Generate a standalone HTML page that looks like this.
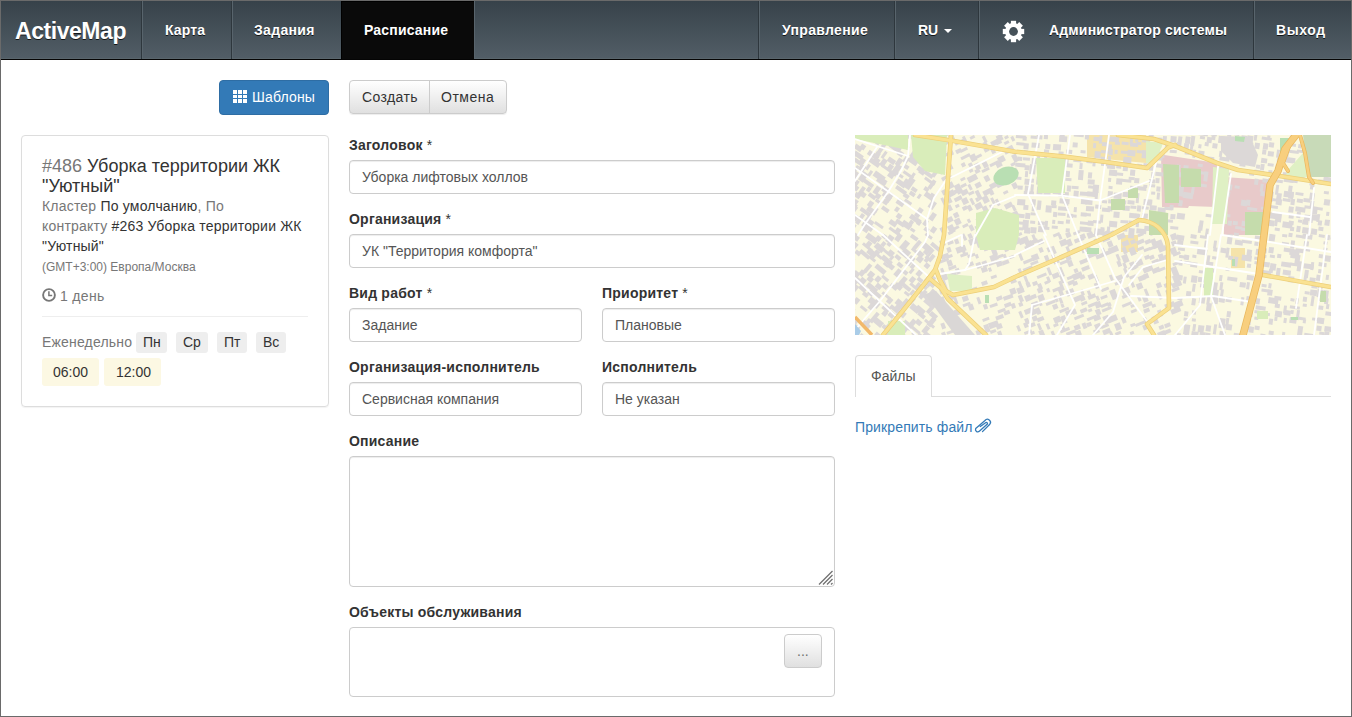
<!DOCTYPE html>
<html><head><meta charset="utf-8">
<style>
*{box-sizing:border-box;margin:0;padding:0}
html,body{width:1352px;height:717px;overflow:hidden;background:#fff}
body{position:relative;font-family:"Liberation Sans",sans-serif;font-size:14px;line-height:20px;color:#333}
.a{position:absolute;white-space:nowrap}
#frame{position:absolute;left:0;top:0;width:1352px;height:717px;border:1px solid #6a6a6a;z-index:50;pointer-events:none}
#nav{position:absolute;left:1px;top:1px;width:1350px;height:58px;background:linear-gradient(to bottom,#37424a 0%,#525e67 100%)}
#navb{position:absolute;left:1px;top:59px;width:1350px;height:1px;background:#050505}
.sd{position:absolute;top:1px;height:58px;width:1px;background:#2e373d}
.sl{position:absolute;top:1px;height:58px;width:1px;background:#58646c}
.nt{position:absolute;top:20px;font-weight:bold;color:#fff;text-shadow:0 1px 0 rgba(0,0,0,.75);white-space:nowrap}
#active{position:absolute;left:341px;top:1px;width:133px;height:58px;background:#0a0a0a;border-left:1px solid #000;border-top:1px solid #000}
.btn{position:absolute;height:34px;border-radius:4px}
.lbl{position:absolute;font-weight:bold;color:#333;white-space:nowrap;letter-spacing:0.22px}
.inp{position:absolute;height:34px;border:1px solid #ccc;border-radius:4px;box-shadow:inset 0 1px 1px rgba(0,0,0,.075);background:#fff}
.itx{position:absolute;color:#555;white-space:nowrap}
.g{color:#777}
.badge{position:absolute;top:332px;height:21px;background:#eee;border-radius:3px}
.tm{position:absolute;top:358px;height:28px;background:#fcf8e3;border-radius:3px}
</style></head><body>
<div id="frame"></div>
<div id="nav"></div>
<div id="navb"></div><div class="a" style="left:1px;top:58px;width:1350px;height:1px;background:#59656c"></div>
<div id="active"></div>
<div class="sd" style="left:141px"></div><div class="sl" style="left:142px"></div>
<div class="sd" style="left:231px"></div><div class="sl" style="left:232px"></div>
<div class="sl" style="left:474px"></div>
<div class="sd" style="left:758px"></div><div class="sl" style="left:759px"></div>
<div class="sd" style="left:894px"></div><div class="sl" style="left:895px"></div>
<div class="sd" style="left:978px"></div><div class="sl" style="left:979px"></div>
<div class="sd" style="left:1253px"></div><div class="sl" style="left:1254px"></div>

<div class="nt" style="left:15px;top:21px;font-size:23px;line-height:20px;letter-spacing:-0.45px">ActiveMap</div>
<div class="nt" style="left:165px;letter-spacing:0.15px">Карта</div>
<div class="nt" style="left:254px;letter-spacing:0.33px">Задания</div>
<div class="nt" style="left:364px;letter-spacing:0.18px">Расписание</div>
<div class="nt" style="left:782px;letter-spacing:0.33px">Управление</div>
<div class="nt" style="left:918px">RU</div>
<div class="a" style="left:944px;top:29px;width:0;height:0;border-left:4px solid transparent;border-right:4px solid transparent;border-top:4px solid #fff"></div>
<svg class="a" style="left:1002px;top:20px" width="23" height="23" viewBox="0 0 23 23">
 <defs><mask id="gm"><g transform="translate(11.5 11.5)" fill="#fff"><circle r="8.4"/><rect x="-2.6" y="-10.7" width="5.2" height="21.4" transform="rotate(0)"/><rect x="-2.6" y="-10.7" width="5.2" height="21.4" transform="rotate(45)"/><rect x="-2.6" y="-10.7" width="5.2" height="21.4" transform="rotate(90)"/><rect x="-2.6" y="-10.7" width="5.2" height="21.4" transform="rotate(135)"/><circle r="4.4" fill="#000"/></g></mask></defs>
 <rect width="23" height="23" fill="#fff" mask="url(#gm)"/>
</svg>
<div class="nt" style="left:1049px;letter-spacing:0.17px">Администратор системы</div>
<div class="nt" style="left:1276px;letter-spacing:0.6px">Выход</div>

<!-- buttons -->
<div class="btn" style="left:219px;top:80px;width:110px;height:35px;background:#337ab7;border:1px solid #2e6da4"></div>
<svg class="a" style="left:233px;top:90px" width="14" height="13" viewBox="0 0 14 13" fill="#fff" shape-rendering="crispEdges"><rect x="0" y="0" width="4" height="4"/><rect x="5" y="0" width="4" height="4"/><rect x="10" y="0" width="4" height="4"/><rect x="0" y="5" width="4" height="3"/><rect x="5" y="5" width="4" height="3"/><rect x="10" y="5" width="4" height="3"/><rect x="0" y="9" width="4" height="4"/><rect x="5" y="9" width="4" height="4"/><rect x="10" y="9" width="4" height="4"/></svg>
<div class="a" style="left:252px;top:87px;color:#fff;letter-spacing:0.17px">Шаблоны</div>

<div class="btn" style="left:349px;top:80px;width:158px;background:linear-gradient(to bottom,#fff 0%,#e0e0e0 100%);border:1px solid #ccc;box-shadow:inset 0 1px 0 rgba(255,255,255,.15),0 1px 1px rgba(0,0,0,.075)"></div>
<div class="a" style="left:429px;top:80px;width:1px;height:34px;background:#ccc"></div>
<div class="a" style="left:362px;top:87px;color:#333;letter-spacing:0.38px">Создать</div>
<div class="a" style="left:441px;top:87px;color:#333;letter-spacing:0.5px">Отмена</div>

<!-- card -->
<div class="a" style="left:21px;top:135px;width:308px;height:272px;border:1px solid #ddd;border-radius:4px;box-shadow:0 1px 1px rgba(0,0,0,.05)"></div>
<div class="a" style="left:42px;top:156px;font-size:18px;line-height:20px;color:#333"><span class="g">#486</span> Уборка территории ЖК<br>"Уютный"</div>
<div class="a" style="left:42px;top:196px;line-height:20px;letter-spacing:0.2px"><span class="g">Кластер</span> По умолчанию<span class="g">, По</span><br><span class="g">контракту</span> #263 Уборка территории ЖК<br>"Уютный"</div>
<div class="a g" style="left:42px;top:257px;font-size:12px">(GMT+3:00) Европа/Москва</div>
<svg class="a" style="left:42px;top:288px" width="14" height="14" viewBox="0 0 14 14">
 <circle cx="7" cy="7" r="5.9" fill="none" stroke="#777" stroke-width="1.9"/>
 <path d="M6.9 3.3 V7.6 H10.2" fill="none" stroke="#777" stroke-width="1.5"/>
</svg>
<div class="a g" style="left:60px;top:286px;letter-spacing:0.33px">1 день</div>
<div class="a" style="left:42px;top:316px;width:266px;height:1px;background:#eee"></div>
<div class="a g" style="left:42px;top:332px;letter-spacing:0.18px">Еженедельно</div>
<div class="badge" style="left:136px;width:31px"></div><div class="a" style="left:143px;top:332px">Пн</div>
<div class="badge" style="left:176px;width:32px"></div><div class="a" style="left:183px;top:332px">Ср</div>
<div class="badge" style="left:217px;width:30px"></div><div class="a" style="left:224px;top:332px">Пт</div>
<div class="badge" style="left:256px;width:30px"></div><div class="a" style="left:263px;top:332px">Вс</div>
<div class="tm" style="left:42px;width:57px"></div><div class="a" style="left:53px;top:362px">06:00</div>
<div class="tm" style="left:104px;width:57px"></div><div class="a" style="left:116px;top:362px">12:00</div>

<!-- form -->
<div class="lbl" style="left:349px;top:135px">Заголовок <span style="font-weight:normal">*</span></div>
<div class="inp" style="left:349px;top:160px;width:486px"></div>
<div class="itx" style="left:362px;top:167px">Уборка лифтовых холлов</div>

<div class="lbl" style="left:349px;top:209px">Организация <span style="font-weight:normal">*</span></div>
<div class="inp" style="left:349px;top:234px;width:486px"></div>
<div class="itx" style="left:362px;top:241px">УК "Территория комфорта"</div>

<div class="lbl" style="left:349px;top:283px">Вид работ <span style="font-weight:normal">*</span></div>
<div class="inp" style="left:349px;top:308px;width:233px"></div>
<div class="itx" style="left:362px;top:315px">Задание</div>
<div class="lbl" style="left:602px;top:283px">Приоритет <span style="font-weight:normal">*</span></div>
<div class="inp" style="left:602px;top:308px;width:233px"></div>
<div class="itx" style="left:615px;top:315px">Плановые</div>

<div class="lbl" style="left:349px;top:357px">Организация-исполнитель</div>
<div class="inp" style="left:349px;top:382px;width:233px"></div>
<div class="itx" style="left:362px;top:389px">Сервисная компания</div>
<div class="lbl" style="left:602px;top:357px">Исполнитель</div>
<div class="inp" style="left:602px;top:382px;width:233px"></div>
<div class="itx" style="left:615px;top:389px">Не указан</div>

<div class="lbl" style="left:349px;top:431px">Описание</div>
<div class="inp" style="left:349px;top:456px;width:486px;height:131px"></div>
<svg class="a" style="left:818px;top:570px" width="16" height="16" viewBox="0 0 16 16" stroke="#6f6f6f" stroke-width="1.2">
 <path d="M1 14.5 L14.5 1"/><path d="M5 14.5 L14.5 5"/><path d="M9 14.5 L14.5 9"/><path d="M13 14.5 L14.5 13"/>
</svg>

<div class="lbl" style="left:349px;top:602px">Объекты обслуживания</div>
<div class="a" style="left:349px;top:627px;width:486px;height:70px;border:1px solid #ccc;border-radius:4px"></div>
<div class="btn" style="left:784px;top:634px;width:38px;background:linear-gradient(to bottom,#fff 0%,#e0e0e0 100%);border:1px solid #ccc"></div>
<div class="a" style="left:797px;top:641px;font-size:14px;color:#707070">...</div>

<!-- map -->
<div id="map" class="a" style="left:855px;top:135px;width:476px;height:200px;background:#fbf9e3;overflow:hidden">
<svg width="476" height="200" viewBox="0 0 476 200" style="position:absolute;left:0;top:0;display:block"><rect width="476" height="200" fill="#fbf9e1"/><path d="M306,19.5 L362,28 L361,72 L334,71 L333,73 L307,72 Z" fill="#e8caca"/><path d="M369,42 L412,45 L411,100 L369,100 Z" fill="#e8caca"/><path d="M232,0 L291,0 L291,28 L260,25 L232,22 Z" fill="#f5e3aa"/><path d="M266,100 L283,100 L283,117 L266,117 Z" fill="#f5e3aa"/><path d="M376,113 L390,113 L390,133 L376,133 Z" fill="#f5e3aa"/><g fill="#dcd8d8"><rect x="0.9" y="-6.0" width="6" height="6" transform="rotate(35 0.9 -6.0)"/><rect x="8.9" y="-7.2" width="5" height="3" transform="rotate(35 8.9 -7.2)"/><rect x="36.3" y="-5.2" width="12" height="4" transform="rotate(35 36.3 -5.2)"/><rect x="43.4" y="-6.0" width="10" height="5" transform="rotate(35 43.4 -6.0)"/><rect x="50.2" y="-4.7" width="8" height="5" transform="rotate(35 50.2 -4.7)"/><rect x="57.0" y="-7.4" width="6" height="5" transform="rotate(35 57.0 -7.4)"/><rect x="63.4" y="-7.3" width="4" height="5" transform="rotate(35 63.4 -7.3)"/><rect x="77.7" y="-7.3" width="5" height="8" transform="rotate(35 77.7 -7.3)"/><rect x="90.9" y="-6.8" width="4" height="5" transform="rotate(-27 90.9 -6.8)"/><rect x="98.0" y="-5.8" width="5" height="3" transform="rotate(-27 98.0 -5.8)"/><rect x="120.3" y="-4.5" width="5" height="5" transform="rotate(-27 120.3 -4.5)"/><rect x="127.3" y="-5.8" width="5" height="3" transform="rotate(-27 127.3 -5.8)"/><rect x="140.7" y="-7.3" width="3" height="10" transform="rotate(-27 140.7 -7.3)"/><rect x="147.6" y="-5.6" width="8" height="5" transform="rotate(-27 147.6 -5.6)"/><rect x="153.9" y="-6.3" width="6" height="3" transform="rotate(-27 153.9 -6.3)"/><rect x="177.1" y="-5.7" width="3" height="4" transform="rotate(5 177.1 -5.7)"/><rect x="184.4" y="-6.8" width="6" height="5" transform="rotate(5 184.4 -6.8)"/><rect x="190.3" y="-6.6" width="3" height="10" transform="rotate(5 190.3 -6.6)"/><rect x="196.9" y="-5.5" width="4" height="4" transform="rotate(5 196.9 -5.5)"/><rect x="205.2" y="-5.3" width="5" height="7" transform="rotate(5 205.2 -5.3)"/><rect x="209.6" y="-6.7" width="5" height="3" transform="rotate(5 209.6 -6.7)"/><rect x="219.2" y="-4.6" width="10" height="6" transform="rotate(5 219.2 -4.6)"/><rect x="223.9" y="-7.4" width="6" height="4" transform="rotate(5 223.9 -7.4)"/><rect x="230.6" y="-5.6" width="4" height="10" transform="rotate(5 230.6 -5.6)"/><rect x="240.5" y="-7.3" width="10" height="3" transform="rotate(5 240.5 -7.3)"/><rect x="254.2" y="-6.4" width="4" height="5" transform="rotate(5 254.2 -6.4)"/><rect x="258.6" y="-6.0" width="10" height="5" transform="rotate(5 258.6 -6.0)"/><rect x="265.5" y="-7.3" width="4" height="4" transform="rotate(5 265.5 -7.3)"/><rect x="286.8" y="-5.2" width="8" height="3" transform="rotate(5 286.8 -5.2)"/><rect x="294.2" y="-5.4" width="5" height="8" transform="rotate(5 294.2 -5.4)"/><rect x="300.5" y="-6.6" width="6" height="5" transform="rotate(5 300.5 -6.6)"/><rect x="310.2" y="-5.5" width="5" height="4" transform="rotate(5 310.2 -5.5)"/><rect x="323.8" y="-6.9" width="5" height="6" transform="rotate(8 323.8 -6.9)"/><rect x="329.1" y="-7.1" width="4" height="3" transform="rotate(8 329.1 -7.1)"/><rect x="336.3" y="-7.0" width="6" height="3" transform="rotate(8 336.3 -7.0)"/><rect x="343.6" y="-5.9" width="10" height="6" transform="rotate(8 343.6 -5.9)"/><rect x="356.6" y="-5.4" width="6" height="6" transform="rotate(8 356.6 -5.4)"/><rect x="363.9" y="-6.1" width="6" height="3" transform="rotate(8 363.9 -6.1)"/><rect x="372.9" y="-4.5" width="4" height="6" transform="rotate(8 372.9 -4.5)"/><rect x="379.9" y="-4.6" width="5" height="5" transform="rotate(8 379.9 -4.6)"/><rect x="386.6" y="-5.2" width="3" height="4" transform="rotate(8 386.6 -5.2)"/><rect x="400.0" y="-4.5" width="3" height="10" transform="rotate(8 400.0 -4.5)"/><rect x="408.3" y="-5.3" width="7" height="3" transform="rotate(8 408.3 -5.3)"/><rect x="415.2" y="-6.4" width="8" height="4" transform="rotate(8 415.2 -6.4)"/><rect x="429.0" y="-5.6" width="5" height="3" transform="rotate(8 429.0 -5.6)"/><rect x="436.4" y="-4.6" width="6" height="4" transform="rotate(8 436.4 -4.6)"/><rect x="443.1" y="-6.5" width="7" height="4" transform="rotate(8 443.1 -6.5)"/><rect x="449.8" y="-6.0" width="4" height="5" transform="rotate(8 449.8 -6.0)"/><rect x="461.9" y="-7.1" width="10" height="6" transform="rotate(8 461.9 -7.1)"/><rect x="470.6" y="-4.7" width="10" height="3" transform="rotate(8 470.6 -4.7)"/><rect x="-5.8" y="-0.0" width="5" height="12" transform="rotate(35 -5.8 -0.0)"/><rect x="15.1" y="1.2" width="12" height="3" transform="rotate(35 15.1 1.2)"/><rect x="36.2" y="1.0" width="5" height="6" transform="rotate(35 36.2 1.0)"/><rect x="44.4" y="2.3" width="6" height="10" transform="rotate(35 44.4 2.3)"/><rect x="56.9" y="0.5" width="12" height="3" transform="rotate(35 56.9 0.5)"/><rect x="62.9" y="1.8" width="4" height="6" transform="rotate(35 62.9 1.8)"/><rect x="71.6" y="0.5" width="6" height="12" transform="rotate(35 71.6 0.5)"/><rect x="78.7" y="-0.1" width="8" height="4" transform="rotate(35 78.7 -0.1)"/><rect x="86.1" y="-0.4" width="12" height="4" transform="rotate(-27 86.1 -0.4)"/><rect x="93.1" y="1.1" width="5" height="6" transform="rotate(-27 93.1 1.1)"/><rect x="106.9" y="2.2" width="3" height="6" transform="rotate(-27 106.9 2.2)"/><rect x="114.5" y="2.2" width="5" height="3" transform="rotate(-27 114.5 2.2)"/><rect x="126.8" y="1.9" width="3" height="7" transform="rotate(-27 126.8 1.9)"/><rect x="140.6" y="1.6" width="6" height="6" transform="rotate(-27 140.6 1.6)"/><rect x="149.0" y="1.9" width="4" height="3" transform="rotate(-27 149.0 1.9)"/><rect x="155.3" y="2.2" width="3" height="5" transform="rotate(-27 155.3 2.2)"/><rect x="161.0" y="-0.0" width="10" height="3" transform="rotate(5 161.0 -0.0)"/><rect x="167.9" y="1.5" width="4" height="4" transform="rotate(5 167.9 1.5)"/><rect x="175.8" y="0.6" width="6" height="3" transform="rotate(5 175.8 0.6)"/><rect x="181.6" y="0.1" width="6" height="4" transform="rotate(5 181.6 0.1)"/><rect x="189.1" y="-0.0" width="4" height="4" transform="rotate(5 189.1 -0.0)"/><rect x="204.4" y="0.7" width="8" height="6" transform="rotate(5 204.4 0.7)"/><rect x="238.7" y="1.7" width="6" height="4" transform="rotate(5 238.7 1.7)"/><rect x="244.5" y="0.6" width="3" height="8" transform="rotate(5 244.5 0.6)"/><rect x="254.3" y="1.5" width="10" height="5" transform="rotate(5 254.3 1.5)"/><rect x="275.4" y="-0.4" width="3" height="10" transform="rotate(5 275.4 -0.4)"/><rect x="280.7" y="-0.3" width="3" height="7" transform="rotate(5 280.7 -0.3)"/><rect x="287.3" y="2.2" width="8" height="5" transform="rotate(5 287.3 2.2)"/><rect x="295.2" y="2.5" width="10" height="3" transform="rotate(5 295.2 2.5)"/><rect x="302.5" y="2.4" width="5" height="5" transform="rotate(5 302.5 2.4)"/><rect x="308.0" y="1.0" width="4" height="5" transform="rotate(5 308.0 1.0)"/><rect x="315.8" y="1.1" width="6" height="6" transform="rotate(5 315.8 1.1)"/><rect x="323.5" y="1.2" width="4" height="10" transform="rotate(8 323.5 1.2)"/><rect x="330.8" y="1.3" width="5" height="7" transform="rotate(8 330.8 1.3)"/><rect x="336.4" y="0.7" width="4" height="10" transform="rotate(8 336.4 0.7)"/><rect x="345.2" y="0.8" width="5" height="3" transform="rotate(8 345.2 0.8)"/><rect x="352.3" y="1.7" width="5" height="6" transform="rotate(8 352.3 1.7)"/><rect x="356.7" y="0.8" width="4" height="4" transform="rotate(8 356.7 0.8)"/><rect x="363.9" y="0.8" width="6" height="7" transform="rotate(8 363.9 0.8)"/><rect x="386.7" y="0.2" width="6" height="6" transform="rotate(8 386.7 0.2)"/><rect x="392.6" y="0.3" width="6" height="8" transform="rotate(8 392.6 0.3)"/><rect x="407.0" y="1.5" width="10" height="3" transform="rotate(8 407.0 1.5)"/><rect x="412.5" y="0.3" width="3" height="4" transform="rotate(8 412.5 0.3)"/><rect x="435.0" y="0.6" width="7" height="3" transform="rotate(8 435.0 0.6)"/><rect x="449.4" y="1.8" width="7" height="4" transform="rotate(8 449.4 1.8)"/><rect x="471.0" y="0.1" width="8" height="3" transform="rotate(8 471.0 0.1)"/><rect x="476.5" y="1.1" width="8" height="5" transform="rotate(8 476.5 1.1)"/><rect x="-6.1" y="9.0" width="8" height="4" transform="rotate(35 -6.1 9.0)"/><rect x="1.3" y="8.6" width="8" height="5" transform="rotate(35 1.3 8.6)"/><rect x="7.2" y="8.5" width="5" height="5" transform="rotate(35 7.2 8.5)"/><rect x="28.4" y="7.5" width="4" height="12" transform="rotate(35 28.4 7.5)"/><rect x="37.0" y="6.6" width="12" height="6" transform="rotate(35 37.0 6.6)"/><rect x="43.7" y="7.6" width="4" height="6" transform="rotate(35 43.7 7.6)"/><rect x="50.8" y="9.1" width="5" height="4" transform="rotate(35 50.8 9.1)"/><rect x="64.5" y="8.9" width="12" height="5" transform="rotate(35 64.5 8.9)"/><rect x="79.2" y="6.8" width="6" height="3" transform="rotate(35 79.2 6.8)"/><rect x="85.4" y="7.2" width="12" height="5" transform="rotate(-27 85.4 7.2)"/><rect x="99.5" y="8.0" width="10" height="3" transform="rotate(-27 99.5 8.0)"/><rect x="127.4" y="8.1" width="4" height="5" transform="rotate(-27 127.4 8.1)"/><rect x="135.2" y="7.2" width="10" height="5" transform="rotate(-27 135.2 7.2)"/><rect x="140.5" y="7.7" width="6" height="3" transform="rotate(-27 140.5 7.7)"/><rect x="148.7" y="7.4" width="5" height="3" transform="rotate(-27 148.7 7.4)"/><rect x="161.4" y="7.1" width="8" height="3" transform="rotate(5 161.4 7.1)"/><rect x="168.9" y="8.0" width="5" height="6" transform="rotate(5 168.9 8.0)"/><rect x="176.8" y="7.4" width="8" height="5" transform="rotate(5 176.8 7.4)"/><rect x="190.5" y="8.8" width="5" height="5" transform="rotate(5 190.5 8.8)"/><rect x="198.3" y="8.9" width="8" height="6" transform="rotate(5 198.3 8.9)"/><rect x="217.9" y="7.2" width="5" height="5" transform="rotate(5 217.9 7.2)"/><rect x="238.3" y="8.1" width="3" height="5" transform="rotate(5 238.3 8.1)"/><rect x="247.2" y="6.9" width="6" height="4" transform="rotate(5 247.2 6.9)"/><rect x="253.1" y="9.2" width="4" height="6" transform="rotate(5 253.1 9.2)"/><rect x="260.0" y="6.6" width="5" height="3" transform="rotate(5 260.0 6.6)"/><rect x="266.8" y="6.6" width="7" height="3" transform="rotate(5 266.8 6.6)"/><rect x="275.4" y="7.4" width="8" height="4" transform="rotate(5 275.4 7.4)"/><rect x="281.5" y="6.7" width="5" height="3" transform="rotate(5 281.5 6.7)"/><rect x="302.6" y="7.9" width="4" height="5" transform="rotate(5 302.6 7.9)"/><rect x="310.1" y="9.0" width="3" height="8" transform="rotate(5 310.1 9.0)"/><rect x="315.6" y="8.1" width="6" height="5" transform="rotate(5 315.6 8.1)"/><rect x="321.8" y="7.1" width="4" height="4" transform="rotate(8 321.8 7.1)"/><rect x="329.3" y="7.9" width="5" height="7" transform="rotate(8 329.3 7.9)"/><rect x="335.9" y="6.8" width="3" height="10" transform="rotate(8 335.9 6.8)"/><rect x="343.7" y="9.0" width="3" height="4" transform="rotate(8 343.7 9.0)"/><rect x="350.0" y="6.9" width="4" height="4" transform="rotate(8 350.0 6.9)"/><rect x="357.8" y="8.0" width="5" height="5" transform="rotate(8 357.8 8.0)"/><rect x="378.2" y="9.5" width="4" height="6" transform="rotate(8 378.2 9.5)"/><rect x="385.4" y="7.8" width="6" height="5" transform="rotate(8 385.4 7.8)"/><rect x="392.4" y="6.8" width="6" height="6" transform="rotate(8 392.4 6.8)"/><rect x="400.1" y="7.6" width="5" height="6" transform="rotate(8 400.1 7.6)"/><rect x="408.5" y="8.0" width="5" height="6" transform="rotate(8 408.5 8.0)"/><rect x="414.4" y="7.1" width="5" height="5" transform="rotate(8 414.4 7.1)"/><rect x="427.6" y="7.9" width="3" height="10" transform="rotate(8 427.6 7.9)"/><rect x="435.2" y="8.1" width="6" height="3" transform="rotate(8 435.2 8.1)"/><rect x="443.5" y="9.0" width="3" height="4" transform="rotate(8 443.5 9.0)"/><rect x="450.2" y="7.2" width="5" height="3" transform="rotate(8 450.2 7.2)"/><rect x="456.9" y="7.9" width="3" height="10" transform="rotate(8 456.9 7.9)"/><rect x="463.5" y="8.7" width="3" height="8" transform="rotate(8 463.5 8.7)"/><rect x="469.7" y="6.6" width="4" height="6" transform="rotate(8 469.7 6.6)"/><rect x="476.5" y="6.9" width="6" height="3" transform="rotate(8 476.5 6.9)"/><rect x="-7.4" y="15.5" width="10" height="3" transform="rotate(35 -7.4 15.5)"/><rect x="0.7" y="15.4" width="10" height="5" transform="rotate(35 0.7 15.4)"/><rect x="14.7" y="14.8" width="12" height="5" transform="rotate(35 14.7 14.8)"/><rect x="21.8" y="16.2" width="5" height="5" transform="rotate(35 21.8 16.2)"/><rect x="30.2" y="15.7" width="3" height="8" transform="rotate(35 30.2 15.7)"/><rect x="44.4" y="14.9" width="6" height="5" transform="rotate(35 44.4 14.9)"/><rect x="57.7" y="16.1" width="12" height="6" transform="rotate(35 57.7 16.1)"/><rect x="63.0" y="15.4" width="3" height="5" transform="rotate(35 63.0 15.4)"/><rect x="71.9" y="13.9" width="3" height="10" transform="rotate(35 71.9 13.9)"/><rect x="78.7" y="13.6" width="10" height="6" transform="rotate(35 78.7 13.6)"/><rect x="84.7" y="14.6" width="5" height="5" transform="rotate(-27 84.7 14.6)"/><rect x="93.2" y="14.4" width="3" height="7" transform="rotate(-27 93.2 14.4)"/><rect x="100.1" y="15.6" width="6" height="4" transform="rotate(-27 100.1 15.6)"/><rect x="104.5" y="15.4" width="8" height="3" transform="rotate(-27 104.5 15.4)"/><rect x="128.4" y="14.3" width="5" height="4" transform="rotate(-27 128.4 14.3)"/><rect x="135.3" y="14.8" width="4" height="5" transform="rotate(-27 135.3 14.8)"/><rect x="148.0" y="14.4" width="10" height="6" transform="rotate(-27 148.0 14.4)"/><rect x="155.3" y="14.2" width="3" height="5" transform="rotate(-27 155.3 14.2)"/><rect x="168.8" y="15.1" width="4" height="3" transform="rotate(5 168.8 15.1)"/><rect x="189.2" y="14.3" width="5" height="3" transform="rotate(5 189.2 14.3)"/><rect x="203.7" y="16.3" width="5" height="3" transform="rotate(5 203.7 16.3)"/><rect x="211.4" y="14.6" width="6" height="4" transform="rotate(5 211.4 14.6)"/><rect x="225.7" y="15.1" width="5" height="3" transform="rotate(5 225.7 15.1)"/><rect x="239.9" y="15.9" width="6" height="7" transform="rotate(5 239.9 15.9)"/><rect x="246.2" y="15.0" width="8" height="3" transform="rotate(5 246.2 15.0)"/><rect x="254.1" y="14.0" width="4" height="6" transform="rotate(5 254.1 14.0)"/><rect x="259.8" y="14.8" width="3" height="4" transform="rotate(5 259.8 14.8)"/><rect x="266.0" y="15.4" width="10" height="3" transform="rotate(5 266.0 15.4)"/><rect x="272.7" y="14.8" width="8" height="6" transform="rotate(5 272.7 14.8)"/><rect x="281.8" y="15.0" width="8" height="3" transform="rotate(5 281.8 15.0)"/><rect x="287.2" y="15.0" width="5" height="8" transform="rotate(5 287.2 15.0)"/><rect x="294.7" y="14.6" width="4" height="3" transform="rotate(5 294.7 14.6)"/><rect x="302.8" y="16.5" width="7" height="6" transform="rotate(5 302.8 16.5)"/><rect x="314.9" y="14.7" width="7" height="3" transform="rotate(5 314.9 14.7)"/><rect x="330.3" y="14.4" width="5" height="5" transform="rotate(8 330.3 14.4)"/><rect x="338.3" y="14.6" width="3" height="8" transform="rotate(8 338.3 14.6)"/><rect x="343.7" y="15.4" width="6" height="6" transform="rotate(8 343.7 15.4)"/><rect x="364.6" y="15.8" width="3" height="6" transform="rotate(8 364.6 15.8)"/><rect x="372.1" y="14.0" width="5" height="6" transform="rotate(8 372.1 14.0)"/><rect x="386.5" y="16.1" width="5" height="7" transform="rotate(8 386.5 16.1)"/><rect x="393.6" y="14.6" width="6" height="4" transform="rotate(8 393.6 14.6)"/><rect x="407.6" y="14.3" width="4" height="5" transform="rotate(8 407.6 14.3)"/><rect x="413.2" y="16.0" width="6" height="5" transform="rotate(8 413.2 16.0)"/><rect x="422.1" y="14.6" width="3" height="8" transform="rotate(8 422.1 14.6)"/><rect x="428.3" y="15.0" width="6" height="8" transform="rotate(8 428.3 15.0)"/><rect x="434.1" y="14.7" width="10" height="3" transform="rotate(8 434.1 14.7)"/><rect x="442.1" y="14.4" width="7" height="3" transform="rotate(8 442.1 14.4)"/><rect x="450.0" y="15.1" width="5" height="5" transform="rotate(8 450.0 15.1)"/><rect x="455.6" y="13.8" width="3" height="8" transform="rotate(8 455.6 13.8)"/><rect x="464.0" y="15.7" width="4" height="4" transform="rotate(8 464.0 15.7)"/><rect x="468.7" y="16.1" width="6" height="3" transform="rotate(8 468.7 16.1)"/><rect x="478.1" y="14.2" width="5" height="4" transform="rotate(8 478.1 14.2)"/><rect x="0.4" y="22.6" width="10" height="4" transform="rotate(35 0.4 22.6)"/><rect x="7.0" y="22.5" width="5" height="5" transform="rotate(35 7.0 22.5)"/><rect x="15.9" y="21.9" width="12" height="5" transform="rotate(35 15.9 21.9)"/><rect x="20.6" y="21.7" width="6" height="5" transform="rotate(35 20.6 21.7)"/><rect x="28.6" y="23.0" width="5" height="8" transform="rotate(35 28.6 23.0)"/><rect x="34.6" y="21.5" width="8" height="5" transform="rotate(35 34.6 21.5)"/><rect x="44.2" y="22.4" width="5" height="8" transform="rotate(35 44.2 22.4)"/><rect x="50.6" y="21.1" width="5" height="6" transform="rotate(35 50.6 21.1)"/><rect x="55.7" y="20.7" width="10" height="6" transform="rotate(35 55.7 20.7)"/><rect x="63.7" y="22.9" width="8" height="5" transform="rotate(35 63.7 22.9)"/><rect x="70.9" y="20.6" width="4" height="8" transform="rotate(35 70.9 20.6)"/><rect x="86.4" y="20.5" width="12" height="3" transform="rotate(-27 86.4 20.5)"/><rect x="105.4" y="22.6" width="10" height="3" transform="rotate(-27 105.4 22.6)"/><rect x="114.0" y="21.0" width="6" height="7" transform="rotate(-27 114.0 21.0)"/><rect x="119.7" y="21.6" width="7" height="3" transform="rotate(-27 119.7 21.6)"/><rect x="142.0" y="23.2" width="7" height="6" transform="rotate(-27 142.0 23.2)"/><rect x="156.1" y="20.7" width="5" height="8" transform="rotate(-27 156.1 20.7)"/><rect x="162.4" y="21.6" width="5" height="4" transform="rotate(5 162.4 21.6)"/><rect x="168.1" y="22.2" width="7" height="3" transform="rotate(5 168.1 22.2)"/><rect x="177.0" y="22.9" width="7" height="6" transform="rotate(5 177.0 22.9)"/><rect x="182.2" y="21.1" width="3" height="8" transform="rotate(5 182.2 21.1)"/><rect x="189.3" y="21.3" width="3" height="7" transform="rotate(5 189.3 21.3)"/><rect x="197.6" y="20.9" width="6" height="4" transform="rotate(5 197.6 20.9)"/><rect x="205.5" y="20.9" width="4" height="6" transform="rotate(5 205.5 20.9)"/><rect x="210.0" y="20.7" width="4" height="10" transform="rotate(5 210.0 20.7)"/><rect x="218.7" y="21.7" width="8" height="5" transform="rotate(5 218.7 21.7)"/><rect x="231.8" y="23.0" width="6" height="5" transform="rotate(5 231.8 23.0)"/><rect x="238.0" y="23.2" width="3" height="8" transform="rotate(5 238.0 23.2)"/><rect x="245.7" y="21.5" width="5" height="4" transform="rotate(5 245.7 21.5)"/><rect x="253.2" y="21.0" width="3" height="6" transform="rotate(5 253.2 21.0)"/><rect x="268.5" y="21.7" width="6" height="6" transform="rotate(5 268.5 21.7)"/><rect x="272.7" y="22.2" width="4" height="8" transform="rotate(5 272.7 22.2)"/><rect x="294.0" y="20.6" width="3" height="4" transform="rotate(5 294.0 20.6)"/><rect x="300.6" y="22.2" width="7" height="3" transform="rotate(5 300.6 22.2)"/><rect x="349.5" y="20.9" width="10" height="4" transform="rotate(8 349.5 20.9)"/><rect x="364.8" y="21.4" width="10" height="4" transform="rotate(8 364.8 21.4)"/><rect x="371.3" y="21.1" width="4" height="3" transform="rotate(8 371.3 21.1)"/><rect x="379.5" y="21.0" width="5" height="4" transform="rotate(8 379.5 21.0)"/><rect x="406.5" y="22.8" width="6" height="5" transform="rotate(8 406.5 22.8)"/><rect x="422.2" y="22.9" width="7" height="4" transform="rotate(8 422.2 22.9)"/><rect x="428.8" y="22.1" width="10" height="5" transform="rotate(8 428.8 22.1)"/><rect x="433.7" y="22.3" width="7" height="5" transform="rotate(8 433.7 22.3)"/><rect x="449.6" y="21.9" width="7" height="5" transform="rotate(8 449.6 21.9)"/><rect x="455.6" y="22.1" width="4" height="6" transform="rotate(8 455.6 22.1)"/><rect x="462.8" y="22.3" width="6" height="3" transform="rotate(8 462.8 22.3)"/><rect x="469.5" y="21.3" width="5" height="5" transform="rotate(8 469.5 21.3)"/><rect x="476.7" y="23.1" width="3" height="7" transform="rotate(8 476.7 23.1)"/><rect x="2.0" y="29.9" width="3" height="8" transform="rotate(35 2.0 29.9)"/><rect x="6.6" y="28.5" width="6" height="8" transform="rotate(35 6.6 28.5)"/><rect x="13.5" y="28.8" width="3" height="6" transform="rotate(35 13.5 28.8)"/><rect x="27.7" y="29.0" width="12" height="3" transform="rotate(35 27.7 29.0)"/><rect x="35.0" y="28.6" width="5" height="5" transform="rotate(35 35.0 28.6)"/><rect x="42.2" y="28.4" width="6" height="12" transform="rotate(35 42.2 28.4)"/><rect x="50.5" y="28.9" width="5" height="4" transform="rotate(35 50.5 28.9)"/><rect x="64.2" y="30.5" width="8" height="5" transform="rotate(35 64.2 30.5)"/><rect x="72.3" y="29.5" width="6" height="4" transform="rotate(35 72.3 29.5)"/><rect x="77.0" y="29.2" width="3" height="8" transform="rotate(35 77.0 29.2)"/><rect x="84.5" y="29.4" width="5" height="3" transform="rotate(-27 84.5 29.4)"/><rect x="92.7" y="28.6" width="3" height="7" transform="rotate(-27 92.7 28.6)"/><rect x="105.7" y="28.9" width="4" height="4" transform="rotate(-27 105.7 28.9)"/><rect x="112.8" y="29.0" width="4" height="4" transform="rotate(-27 112.8 29.0)"/><rect x="118.7" y="29.4" width="5" height="7" transform="rotate(-27 118.7 29.4)"/><rect x="126.7" y="28.2" width="5" height="6" transform="rotate(-27 126.7 28.2)"/><rect x="134.3" y="29.5" width="10" height="3" transform="rotate(-27 134.3 29.5)"/><rect x="140.2" y="28.7" width="6" height="5" transform="rotate(-27 140.2 28.7)"/><rect x="155.3" y="29.1" width="5" height="3" transform="rotate(-27 155.3 29.1)"/><rect x="160.5" y="27.6" width="10" height="4" transform="rotate(5 160.5 27.6)"/><rect x="169.9" y="30.1" width="5" height="5" transform="rotate(5 169.9 30.1)"/><rect x="175.0" y="29.0" width="6" height="10" transform="rotate(5 175.0 29.0)"/><rect x="189.8" y="28.2" width="3" height="4" transform="rotate(5 189.8 28.2)"/><rect x="196.9" y="28.7" width="5" height="6" transform="rotate(5 196.9 28.7)"/><rect x="203.1" y="28.6" width="7" height="3" transform="rotate(5 203.1 28.6)"/><rect x="209.8" y="28.0" width="8" height="4" transform="rotate(5 209.8 28.0)"/><rect x="224.8" y="28.0" width="3" height="6" transform="rotate(5 224.8 28.0)"/><rect x="246.2" y="27.7" width="10" height="3" transform="rotate(5 246.2 27.7)"/><rect x="252.4" y="28.6" width="8" height="5" transform="rotate(5 252.4 28.6)"/><rect x="261.5" y="29.3" width="5" height="4" transform="rotate(5 261.5 29.3)"/><rect x="268.2" y="29.9" width="5" height="6" transform="rotate(5 268.2 29.9)"/><rect x="282.4" y="28.7" width="5" height="3" transform="rotate(5 282.4 28.7)"/><rect x="288.6" y="28.0" width="5" height="4" transform="rotate(5 288.6 28.0)"/><rect x="294.4" y="30.4" width="4" height="5" transform="rotate(5 294.4 30.4)"/><rect x="300.7" y="28.3" width="7" height="4" transform="rotate(5 300.7 28.3)"/><rect x="321.8" y="29.4" width="4" height="8" transform="rotate(8 321.8 29.4)"/><rect x="328.8" y="29.9" width="5" height="10" transform="rotate(8 328.8 29.9)"/><rect x="343.0" y="28.6" width="5" height="3" transform="rotate(8 343.0 28.6)"/><rect x="364.6" y="29.3" width="10" height="6" transform="rotate(8 364.6 29.3)"/><rect x="384.7" y="28.1" width="6" height="3" transform="rotate(8 384.7 28.1)"/><rect x="401.3" y="29.4" width="4" height="4" transform="rotate(8 401.3 29.4)"/><rect x="405.8" y="28.7" width="4" height="6" transform="rotate(8 405.8 28.7)"/><rect x="412.9" y="28.0" width="6" height="3" transform="rotate(8 412.9 28.0)"/><rect x="421.0" y="28.7" width="5" height="4" transform="rotate(8 421.0 28.7)"/><rect x="455.8" y="29.8" width="7" height="5" transform="rotate(8 455.8 29.8)"/><rect x="471.0" y="30.4" width="8" height="3" transform="rotate(8 471.0 30.4)"/><rect x="476.7" y="29.6" width="3" height="4" transform="rotate(8 476.7 29.6)"/><rect x="-0.0" y="35.3" width="6" height="10" transform="rotate(35 -0.0 35.3)"/><rect x="8.6" y="36.0" width="6" height="10" transform="rotate(35 8.6 36.0)"/><rect x="15.7" y="35.0" width="3" height="6" transform="rotate(35 15.7 35.0)"/><rect x="21.0" y="35.5" width="12" height="6" transform="rotate(35 21.0 35.5)"/><rect x="34.9" y="36.6" width="6" height="5" transform="rotate(35 34.9 36.6)"/><rect x="42.3" y="36.7" width="8" height="3" transform="rotate(35 42.3 36.7)"/><rect x="49.3" y="35.2" width="12" height="3" transform="rotate(35 49.3 35.2)"/><rect x="58.4" y="37.2" width="3" height="10" transform="rotate(35 58.4 37.2)"/><rect x="64.8" y="34.8" width="6" height="3" transform="rotate(35 64.8 34.8)"/><rect x="70.6" y="35.0" width="10" height="4" transform="rotate(35 70.6 35.0)"/><rect x="79.4" y="35.6" width="4" height="6" transform="rotate(35 79.4 35.6)"/><rect x="84.1" y="36.1" width="5" height="4" transform="rotate(-27 84.1 36.1)"/><rect x="113.7" y="35.3" width="4" height="3" transform="rotate(-27 113.7 35.3)"/><rect x="119.3" y="35.4" width="5" height="4" transform="rotate(-27 119.3 35.4)"/><rect x="126.3" y="35.4" width="8" height="3" transform="rotate(-27 126.3 35.4)"/><rect x="155.8" y="35.3" width="6" height="6" transform="rotate(-27 155.8 35.3)"/><rect x="170.3" y="36.0" width="3" height="6" transform="rotate(5 170.3 36.0)"/><rect x="183.7" y="35.4" width="3" height="8" transform="rotate(5 183.7 35.4)"/><rect x="189.6" y="35.6" width="3" height="10" transform="rotate(5 189.6 35.6)"/><rect x="211.1" y="35.8" width="4" height="6" transform="rotate(5 211.1 35.8)"/><rect x="223.8" y="34.9" width="5" height="10" transform="rotate(5 223.8 34.9)"/><rect x="233.3" y="37.2" width="4" height="6" transform="rotate(5 233.3 37.2)"/><rect x="254.3" y="34.6" width="8" height="6" transform="rotate(5 254.3 34.6)"/><rect x="260.3" y="37.3" width="8" height="3" transform="rotate(5 260.3 37.3)"/><rect x="275.4" y="34.6" width="5" height="6" transform="rotate(5 275.4 34.6)"/><rect x="296.4" y="37.0" width="3" height="6" transform="rotate(5 296.4 37.0)"/><rect x="300.5" y="36.8" width="8" height="4" transform="rotate(5 300.5 36.8)"/><rect x="315.2" y="37.1" width="3" height="5" transform="rotate(5 315.2 37.1)"/><rect x="322.9" y="36.9" width="6" height="5" transform="rotate(8 322.9 36.9)"/><rect x="336.1" y="35.2" width="6" height="3" transform="rotate(8 336.1 35.2)"/><rect x="344.9" y="36.1" width="8" height="3" transform="rotate(8 344.9 36.1)"/><rect x="349.6" y="36.2" width="4" height="10" transform="rotate(8 349.6 36.2)"/><rect x="364.8" y="36.5" width="5" height="5" transform="rotate(8 364.8 36.5)"/><rect x="372.2" y="37.3" width="4" height="3" transform="rotate(8 372.2 37.3)"/><rect x="394.4" y="37.3" width="5" height="3" transform="rotate(8 394.4 37.3)"/><rect x="399.5" y="34.6" width="10" height="3" transform="rotate(8 399.5 34.6)"/><rect x="413.6" y="34.9" width="4" height="3" transform="rotate(8 413.6 34.9)"/><rect x="421.5" y="34.9" width="3" height="8" transform="rotate(8 421.5 34.9)"/><rect x="428.1" y="36.9" width="8" height="4" transform="rotate(8 428.1 36.9)"/><rect x="433.7" y="35.2" width="6" height="6" transform="rotate(8 433.7 35.2)"/><rect x="443.4" y="36.4" width="7" height="6" transform="rotate(8 443.4 36.4)"/><rect x="449.3" y="37.0" width="5" height="3" transform="rotate(8 449.3 37.0)"/><rect x="462.7" y="34.7" width="5" height="5" transform="rotate(8 462.7 34.7)"/><rect x="469.1" y="34.6" width="7" height="6" transform="rotate(8 469.1 34.6)"/><rect x="476.9" y="35.0" width="3" height="6" transform="rotate(8 476.9 35.0)"/><rect x="-5.0" y="43.2" width="5" height="8" transform="rotate(35 -5.0 43.2)"/><rect x="-0.1" y="43.2" width="6" height="10" transform="rotate(35 -0.1 43.2)"/><rect x="9.3" y="43.0" width="12" height="4" transform="rotate(35 9.3 43.0)"/><rect x="23.3" y="42.4" width="10" height="4" transform="rotate(35 23.3 42.4)"/><rect x="28.5" y="43.4" width="5" height="5" transform="rotate(35 28.5 43.4)"/><rect x="43.5" y="43.6" width="10" height="5" transform="rotate(35 43.5 43.6)"/><rect x="51.0" y="43.2" width="8" height="6" transform="rotate(35 51.0 43.2)"/><rect x="55.7" y="41.9" width="6" height="12" transform="rotate(35 55.7 41.9)"/><rect x="70.7" y="41.6" width="12" height="3" transform="rotate(35 70.7 41.6)"/><rect x="78.2" y="44.3" width="4" height="10" transform="rotate(35 78.2 44.3)"/><rect x="86.0" y="43.0" width="6" height="4" transform="rotate(-27 86.0 43.0)"/><rect x="91.8" y="42.4" width="5" height="3" transform="rotate(-27 91.8 42.4)"/><rect x="105.0" y="43.9" width="5" height="3" transform="rotate(-27 105.0 43.9)"/><rect x="111.6" y="43.0" width="10" height="6" transform="rotate(-27 111.6 43.0)"/><rect x="128.4" y="42.0" width="5" height="6" transform="rotate(-27 128.4 42.0)"/><rect x="142.5" y="43.4" width="10" height="3" transform="rotate(-27 142.5 43.4)"/><rect x="153.5" y="42.3" width="7" height="3" transform="rotate(-27 153.5 42.3)"/><rect x="161.6" y="41.6" width="5" height="3" transform="rotate(5 161.6 41.6)"/><rect x="169.8" y="43.6" width="5" height="6" transform="rotate(5 169.8 43.6)"/><rect x="175.1" y="43.4" width="4" height="4" transform="rotate(5 175.1 43.4)"/><rect x="181.7" y="41.6" width="6" height="8" transform="rotate(5 181.7 41.6)"/><rect x="189.9" y="41.7" width="5" height="6" transform="rotate(5 189.9 41.7)"/><rect x="195.7" y="41.8" width="4" height="5" transform="rotate(5 195.7 41.8)"/><rect x="210.6" y="42.8" width="6" height="3" transform="rotate(5 210.6 42.8)"/><rect x="232.9" y="44.2" width="7" height="5" transform="rotate(5 232.9 44.2)"/><rect x="253.3" y="42.8" width="3" height="4" transform="rotate(5 253.3 42.8)"/><rect x="261.5" y="43.3" width="6" height="6" transform="rotate(5 261.5 43.3)"/><rect x="266.5" y="43.8" width="10" height="3" transform="rotate(5 266.5 43.8)"/><rect x="273.8" y="41.8" width="6" height="3" transform="rotate(5 273.8 41.8)"/><rect x="279.5" y="42.9" width="5" height="5" transform="rotate(5 279.5 42.9)"/><rect x="294.2" y="44.1" width="6" height="4" transform="rotate(5 294.2 44.1)"/><rect x="300.7" y="42.9" width="4" height="5" transform="rotate(5 300.7 42.9)"/><rect x="309.4" y="42.1" width="10" height="5" transform="rotate(5 309.4 42.1)"/><rect x="338.1" y="42.1" width="4" height="4" transform="rotate(8 338.1 42.1)"/><rect x="399.8" y="43.5" width="4" height="6" transform="rotate(8 399.8 43.5)"/><rect x="407.7" y="43.2" width="7" height="4" transform="rotate(8 407.7 43.2)"/><rect x="413.3" y="43.3" width="7" height="4" transform="rotate(8 413.3 43.3)"/><rect x="420.1" y="44.2" width="8" height="3" transform="rotate(8 420.1 44.2)"/><rect x="429.0" y="42.7" width="10" height="4" transform="rotate(8 429.0 42.7)"/><rect x="435.2" y="42.3" width="8" height="5" transform="rotate(8 435.2 42.3)"/><rect x="455.3" y="43.2" width="4" height="7" transform="rotate(8 455.3 43.2)"/><rect x="463.4" y="44.2" width="6" height="5" transform="rotate(8 463.4 44.2)"/><rect x="468.8" y="41.6" width="8" height="5" transform="rotate(8 468.8 41.6)"/><rect x="-7.3" y="49.4" width="8" height="4" transform="rotate(35 -7.3 49.4)"/><rect x="0.3" y="49.6" width="5" height="5" transform="rotate(35 0.3 49.6)"/><rect x="7.7" y="50.9" width="4" height="12" transform="rotate(35 7.7 50.9)"/><rect x="13.6" y="51.2" width="4" height="5" transform="rotate(35 13.6 51.2)"/><rect x="22.0" y="50.6" width="5" height="8" transform="rotate(35 22.0 50.6)"/><rect x="29.6" y="50.6" width="6" height="6" transform="rotate(35 29.6 50.6)"/><rect x="42.3" y="50.0" width="12" height="4" transform="rotate(35 42.3 50.0)"/><rect x="57.9" y="51.2" width="6" height="4" transform="rotate(35 57.9 51.2)"/><rect x="70.5" y="51.1" width="5" height="4" transform="rotate(35 70.5 51.1)"/><rect x="90.6" y="49.5" width="7" height="6" transform="rotate(-27 90.6 49.5)"/><rect x="98.7" y="50.9" width="6" height="10" transform="rotate(-27 98.7 50.9)"/><rect x="105.3" y="50.5" width="6" height="3" transform="rotate(-27 105.3 50.5)"/><rect x="112.4" y="50.2" width="3" height="6" transform="rotate(-27 112.4 50.2)"/><rect x="119.4" y="49.3" width="6" height="5" transform="rotate(-27 119.4 49.3)"/><rect x="133.9" y="50.0" width="8" height="5" transform="rotate(-27 133.9 50.0)"/><rect x="141.0" y="49.7" width="8" height="4" transform="rotate(-27 141.0 49.7)"/><rect x="156.2" y="49.2" width="5" height="6" transform="rotate(-27 156.2 49.2)"/><rect x="162.9" y="50.4" width="5" height="4" transform="rotate(5 162.9 50.4)"/><rect x="170.0" y="50.6" width="5" height="10" transform="rotate(5 170.0 50.6)"/><rect x="176.0" y="49.2" width="3" height="10" transform="rotate(5 176.0 49.2)"/><rect x="182.2" y="51.4" width="6" height="8" transform="rotate(5 182.2 51.4)"/><rect x="195.7" y="51.5" width="5" height="5" transform="rotate(5 195.7 51.5)"/><rect x="212.2" y="50.3" width="4" height="6" transform="rotate(5 212.2 50.3)"/><rect x="216.7" y="50.7" width="7" height="3" transform="rotate(5 216.7 50.7)"/><rect x="233.3" y="50.3" width="10" height="3" transform="rotate(5 233.3 50.3)"/><rect x="238.2" y="49.4" width="6" height="8" transform="rotate(5 238.2 49.4)"/><rect x="253.7" y="50.8" width="4" height="3" transform="rotate(5 253.7 50.8)"/><rect x="275.2" y="50.7" width="6" height="4" transform="rotate(5 275.2 50.7)"/><rect x="281.6" y="51.1" width="10" height="4" transform="rotate(5 281.6 51.1)"/><rect x="288.4" y="49.7" width="4" height="3" transform="rotate(5 288.4 49.7)"/><rect x="294.3" y="49.1" width="6" height="3" transform="rotate(5 294.3 49.1)"/><rect x="301.6" y="51.3" width="4" height="5" transform="rotate(5 301.6 51.3)"/><rect x="316.3" y="48.9" width="4" height="3" transform="rotate(5 316.3 48.9)"/><rect x="323.3" y="50.2" width="6" height="8" transform="rotate(8 323.3 50.2)"/><rect x="337.2" y="49.2" width="3" height="10" transform="rotate(8 337.2 49.2)"/><rect x="345.1" y="48.6" width="7" height="3" transform="rotate(8 345.1 48.6)"/><rect x="363.9" y="49.0" width="4" height="3" transform="rotate(8 363.9 49.0)"/><rect x="371.6" y="48.8" width="6" height="6" transform="rotate(8 371.6 48.8)"/><rect x="379.9" y="50.3" width="5" height="3" transform="rotate(8 379.9 50.3)"/><rect x="405.8" y="48.5" width="3" height="8" transform="rotate(8 405.8 48.5)"/><rect x="421.3" y="49.7" width="3" height="10" transform="rotate(8 421.3 49.7)"/><rect x="433.8" y="50.5" width="4" height="6" transform="rotate(8 433.8 50.5)"/><rect x="455.5" y="49.3" width="4" height="5" transform="rotate(8 455.5 49.3)"/><rect x="478.5" y="51.0" width="3" height="8" transform="rotate(8 478.5 51.0)"/><rect x="1.5" y="56.8" width="6" height="5" transform="rotate(35 1.5 56.8)"/><rect x="7.7" y="56.3" width="5" height="5" transform="rotate(35 7.7 56.3)"/><rect x="15.0" y="57.3" width="8" height="4" transform="rotate(35 15.0 57.3)"/><rect x="22.3" y="57.7" width="5" height="5" transform="rotate(35 22.3 57.7)"/><rect x="28.9" y="57.0" width="10" height="4" transform="rotate(35 28.9 57.0)"/><rect x="35.0" y="56.9" width="5" height="10" transform="rotate(35 35.0 56.9)"/><rect x="49.9" y="57.6" width="6" height="4" transform="rotate(35 49.9 57.6)"/><rect x="56.0" y="55.6" width="6" height="4" transform="rotate(35 56.0 55.6)"/><rect x="64.5" y="58.4" width="3" height="5" transform="rotate(35 64.5 58.4)"/><rect x="71.5" y="56.3" width="10" height="5" transform="rotate(35 71.5 56.3)"/><rect x="76.7" y="57.4" width="5" height="3" transform="rotate(35 76.7 57.4)"/><rect x="86.1" y="56.0" width="5" height="5" transform="rotate(-27 86.1 56.0)"/><rect x="91.6" y="57.4" width="7" height="6" transform="rotate(-27 91.6 57.4)"/><rect x="98.2" y="55.7" width="6" height="4" transform="rotate(-27 98.2 55.7)"/><rect x="105.4" y="56.8" width="7" height="5" transform="rotate(-27 105.4 56.8)"/><rect x="112.9" y="58.2" width="6" height="3" transform="rotate(-27 112.9 58.2)"/><rect x="119.6" y="56.6" width="4" height="10" transform="rotate(-27 119.6 56.6)"/><rect x="127.3" y="56.8" width="10" height="5" transform="rotate(-27 127.3 56.8)"/><rect x="134.5" y="58.1" width="4" height="3" transform="rotate(-27 134.5 58.1)"/><rect x="147.8" y="57.2" width="5" height="3" transform="rotate(-27 147.8 57.2)"/><rect x="168.9" y="55.9" width="10" height="3" transform="rotate(5 168.9 55.9)"/><rect x="175.0" y="56.5" width="4" height="4" transform="rotate(5 175.0 56.5)"/><rect x="188.8" y="55.6" width="7" height="5" transform="rotate(5 188.8 55.6)"/><rect x="197.9" y="56.1" width="8" height="3" transform="rotate(5 197.9 56.1)"/><rect x="203.4" y="58.3" width="10" height="3" transform="rotate(5 203.4 58.3)"/><rect x="210.0" y="56.9" width="4" height="5" transform="rotate(5 210.0 56.9)"/><rect x="218.9" y="55.6" width="5" height="6" transform="rotate(5 218.9 55.6)"/><rect x="225.1" y="56.4" width="8" height="4" transform="rotate(5 225.1 56.4)"/><rect x="232.3" y="56.3" width="10" height="5" transform="rotate(5 232.3 56.3)"/><rect x="240.3" y="56.2" width="3" height="8" transform="rotate(5 240.3 56.2)"/><rect x="253.0" y="56.1" width="5" height="6" transform="rotate(5 253.0 56.1)"/><rect x="258.9" y="57.6" width="8" height="6" transform="rotate(5 258.9 57.6)"/><rect x="267.8" y="56.8" width="6" height="5" transform="rotate(5 267.8 56.8)"/><rect x="272.9" y="56.3" width="8" height="4" transform="rotate(5 272.9 56.3)"/><rect x="281.5" y="58.0" width="3" height="10" transform="rotate(5 281.5 58.0)"/><rect x="296.3" y="56.4" width="4" height="3" transform="rotate(5 296.3 56.4)"/><rect x="302.1" y="57.4" width="3" height="7" transform="rotate(5 302.1 57.4)"/><rect x="322.4" y="56.9" width="8" height="4" transform="rotate(8 322.4 56.9)"/><rect x="328.5" y="56.8" width="10" height="6" transform="rotate(8 328.5 56.8)"/><rect x="358.8" y="57.6" width="3" height="6" transform="rotate(8 358.8 57.6)"/><rect x="365.5" y="57.0" width="3" height="8" transform="rotate(8 365.5 57.0)"/><rect x="371.5" y="56.4" width="4" height="5" transform="rotate(8 371.5 56.4)"/><rect x="405.8" y="55.9" width="4" height="5" transform="rotate(8 405.8 55.9)"/><rect x="412.9" y="56.0" width="6" height="10" transform="rotate(8 412.9 56.0)"/><rect x="422.0" y="57.9" width="5" height="8" transform="rotate(8 422.0 57.9)"/><rect x="429.2" y="55.7" width="10" height="6" transform="rotate(8 429.2 55.7)"/><rect x="434.0" y="56.5" width="5" height="7" transform="rotate(8 434.0 56.5)"/><rect x="440.7" y="56.9" width="8" height="3" transform="rotate(8 440.7 56.9)"/><rect x="455.1" y="57.5" width="5" height="7" transform="rotate(8 455.1 57.5)"/><rect x="469.1" y="55.9" width="5" height="3" transform="rotate(8 469.1 55.9)"/><rect x="476.9" y="55.9" width="5" height="4" transform="rotate(8 476.9 55.9)"/><rect x="-5.3" y="64.8" width="10" height="3" transform="rotate(35 -5.3 64.8)"/><rect x="0.6" y="63.9" width="4" height="8" transform="rotate(35 0.6 63.9)"/><rect x="15.2" y="65.2" width="5" height="6" transform="rotate(35 15.2 65.2)"/><rect x="21.5" y="63.6" width="6" height="3" transform="rotate(35 21.5 63.6)"/><rect x="30.0" y="63.6" width="5" height="5" transform="rotate(35 30.0 63.6)"/><rect x="43.9" y="62.8" width="8" height="6" transform="rotate(35 43.9 62.8)"/><rect x="50.7" y="63.4" width="8" height="3" transform="rotate(35 50.7 63.4)"/><rect x="77.1" y="64.9" width="6" height="8" transform="rotate(35 77.1 64.9)"/><rect x="85.3" y="63.5" width="3" height="10" transform="rotate(-27 85.3 63.5)"/><rect x="91.4" y="63.4" width="4" height="6" transform="rotate(-27 91.4 63.4)"/><rect x="98.7" y="63.7" width="8" height="4" transform="rotate(-27 98.7 63.7)"/><rect x="106.0" y="64.8" width="6" height="6" transform="rotate(-27 106.0 64.8)"/><rect x="114.3" y="64.1" width="3" height="7" transform="rotate(-27 114.3 64.1)"/><rect x="120.0" y="63.6" width="3" height="4" transform="rotate(-27 120.0 63.6)"/><rect x="126.4" y="62.8" width="6" height="7" transform="rotate(-27 126.4 62.8)"/><rect x="135.1" y="63.6" width="3" height="8" transform="rotate(-27 135.1 63.6)"/><rect x="139.8" y="64.9" width="3" height="7" transform="rotate(-27 139.8 64.9)"/><rect x="162.5" y="63.9" width="8" height="6" transform="rotate(5 162.5 63.9)"/><rect x="177.0" y="64.1" width="4" height="6" transform="rotate(5 177.0 64.1)"/><rect x="182.6" y="65.3" width="4" height="8" transform="rotate(5 182.6 65.3)"/><rect x="196.4" y="65.2" width="5" height="5" transform="rotate(5 196.4 65.2)"/><rect x="204.8" y="63.3" width="10" height="5" transform="rotate(5 204.8 63.3)"/><rect x="209.7" y="65.3" width="4" height="5" transform="rotate(5 209.7 65.3)"/><rect x="226.3" y="62.9" width="6" height="6" transform="rotate(5 226.3 62.9)"/><rect x="230.8" y="63.5" width="7" height="6" transform="rotate(5 230.8 63.5)"/><rect x="247.2" y="65.0" width="5" height="3" transform="rotate(5 247.2 65.0)"/><rect x="253.4" y="64.3" width="6" height="4" transform="rotate(5 253.4 64.3)"/><rect x="268.4" y="65.3" width="3" height="4" transform="rotate(5 268.4 65.3)"/><rect x="272.7" y="65.1" width="7" height="4" transform="rotate(5 272.7 65.1)"/><rect x="288.8" y="64.0" width="8" height="6" transform="rotate(5 288.8 64.0)"/><rect x="294.5" y="64.4" width="3" height="5" transform="rotate(5 294.5 64.4)"/><rect x="324.0" y="65.0" width="4" height="6" transform="rotate(8 324.0 65.0)"/><rect x="358.9" y="63.9" width="7" height="5" transform="rotate(8 358.9 63.9)"/><rect x="365.1" y="62.8" width="7" height="3" transform="rotate(8 365.1 62.8)"/><rect x="386.5" y="64.6" width="6" height="6" transform="rotate(8 386.5 64.6)"/><rect x="391.7" y="64.4" width="4" height="6" transform="rotate(8 391.7 64.4)"/><rect x="413.9" y="62.5" width="10" height="3" transform="rotate(8 413.9 62.5)"/><rect x="421.3" y="63.6" width="6" height="6" transform="rotate(8 421.3 63.6)"/><rect x="428.0" y="63.1" width="8" height="3" transform="rotate(8 428.0 63.1)"/><rect x="436.2" y="63.7" width="4" height="6" transform="rotate(8 436.2 63.7)"/><rect x="442.2" y="63.4" width="6" height="4" transform="rotate(8 442.2 63.4)"/><rect x="448.7" y="62.9" width="7" height="4" transform="rotate(8 448.7 62.9)"/><rect x="455.5" y="65.4" width="4" height="8" transform="rotate(8 455.5 65.4)"/><rect x="469.4" y="64.0" width="6" height="6" transform="rotate(8 469.4 64.0)"/><rect x="-0.1" y="70.4" width="4" height="8" transform="rotate(35 -0.1 70.4)"/><rect x="6.8" y="72.0" width="12" height="4" transform="rotate(35 6.8 72.0)"/><rect x="13.8" y="70.8" width="10" height="5" transform="rotate(35 13.8 70.8)"/><rect x="21.3" y="72.4" width="3" height="5" transform="rotate(35 21.3 72.4)"/><rect x="28.2" y="70.4" width="8" height="4" transform="rotate(35 28.2 70.4)"/><rect x="41.8" y="71.2" width="4" height="5" transform="rotate(35 41.8 71.2)"/><rect x="64.7" y="72.1" width="5" height="10" transform="rotate(35 64.7 72.1)"/><rect x="91.7" y="71.1" width="4" height="6" transform="rotate(-27 91.7 71.1)"/><rect x="99.8" y="70.6" width="4" height="3" transform="rotate(-27 99.8 70.6)"/><rect x="106.8" y="72.4" width="5" height="4" transform="rotate(-27 106.8 72.4)"/><rect x="111.6" y="71.3" width="4" height="6" transform="rotate(-27 111.6 71.3)"/><rect x="119.2" y="69.9" width="7" height="6" transform="rotate(-27 119.2 69.9)"/><rect x="126.6" y="72.4" width="5" height="6" transform="rotate(-27 126.6 72.4)"/><rect x="133.9" y="70.6" width="3" height="8" transform="rotate(-27 133.9 70.6)"/><rect x="148.9" y="70.1" width="8" height="5" transform="rotate(-27 148.9 70.1)"/><rect x="156.3" y="71.1" width="3" height="6" transform="rotate(-27 156.3 71.1)"/><rect x="168.6" y="69.7" width="5" height="5" transform="rotate(5 168.6 69.7)"/><rect x="177.1" y="70.2" width="3" height="6" transform="rotate(5 177.1 70.2)"/><rect x="181.8" y="71.7" width="4" height="3" transform="rotate(5 181.8 71.7)"/><rect x="191.0" y="70.3" width="6" height="7" transform="rotate(5 191.0 70.3)"/><rect x="196.8" y="69.9" width="5" height="3" transform="rotate(5 196.8 69.9)"/><rect x="203.3" y="71.2" width="10" height="4" transform="rotate(5 203.3 71.2)"/><rect x="219.0" y="72.1" width="3" height="5" transform="rotate(5 219.0 72.1)"/><rect x="231.2" y="70.9" width="8" height="5" transform="rotate(5 231.2 70.9)"/><rect x="240.4" y="69.5" width="6" height="4" transform="rotate(5 240.4 69.5)"/><rect x="247.2" y="72.5" width="8" height="4" transform="rotate(5 247.2 72.5)"/><rect x="252.7" y="71.1" width="5" height="5" transform="rotate(5 252.7 71.1)"/><rect x="268.0" y="70.5" width="7" height="5" transform="rotate(5 268.0 70.5)"/><rect x="275.5" y="70.4" width="6" height="3" transform="rotate(5 275.5 70.4)"/><rect x="282.3" y="70.3" width="4" height="6" transform="rotate(5 282.3 70.3)"/><rect x="286.9" y="71.2" width="7" height="3" transform="rotate(5 286.9 71.2)"/><rect x="294.9" y="70.1" width="7" height="5" transform="rotate(5 294.9 70.1)"/><rect x="302.9" y="72.3" width="8" height="5" transform="rotate(5 302.9 72.3)"/><rect x="309.5" y="71.7" width="8" height="3" transform="rotate(5 309.5 71.7)"/><rect x="314.8" y="69.8" width="4" height="5" transform="rotate(5 314.8 69.8)"/><rect x="357.7" y="72.3" width="3" height="5" transform="rotate(8 357.7 72.3)"/><rect x="392.4" y="71.8" width="10" height="3" transform="rotate(8 392.4 71.8)"/><rect x="406.3" y="71.4" width="4" height="3" transform="rotate(8 406.3 71.4)"/><rect x="413.2" y="69.7" width="10" height="3" transform="rotate(8 413.2 69.7)"/><rect x="434.0" y="71.2" width="5" height="6" transform="rotate(8 434.0 71.2)"/><rect x="440.8" y="71.3" width="10" height="5" transform="rotate(8 440.8 71.3)"/><rect x="449.7" y="70.2" width="6" height="3" transform="rotate(8 449.7 70.2)"/><rect x="457.0" y="71.1" width="6" height="8" transform="rotate(8 457.0 71.1)"/><rect x="462.0" y="71.9" width="6" height="3" transform="rotate(8 462.0 71.9)"/><rect x="-6.1" y="79.4" width="6" height="5" transform="rotate(35 -6.1 79.4)"/><rect x="-0.5" y="78.5" width="6" height="6" transform="rotate(35 -0.5 78.5)"/><rect x="6.9" y="78.0" width="4" height="12" transform="rotate(35 6.9 78.0)"/><rect x="13.8" y="79.3" width="4" height="8" transform="rotate(35 13.8 79.3)"/><rect x="43.4" y="77.7" width="5" height="5" transform="rotate(35 43.4 77.7)"/><rect x="56.8" y="78.7" width="12" height="5" transform="rotate(35 56.8 78.7)"/><rect x="77.9" y="77.0" width="5" height="8" transform="rotate(35 77.9 77.0)"/><rect x="97.8" y="79.1" width="5" height="5" transform="rotate(-27 97.8 79.1)"/><rect x="125.5" y="78.2" width="5" height="6" transform="rotate(-27 125.5 78.2)"/><rect x="133.5" y="78.0" width="10" height="3" transform="rotate(-27 133.5 78.0)"/><rect x="140.4" y="77.0" width="7" height="3" transform="rotate(-27 140.4 77.0)"/><rect x="148.3" y="77.3" width="3" height="7" transform="rotate(-27 148.3 77.3)"/><rect x="156.4" y="78.1" width="6" height="5" transform="rotate(-27 156.4 78.1)"/><rect x="161.8" y="78.6" width="8" height="4" transform="rotate(5 161.8 78.6)"/><rect x="170.5" y="77.7" width="5" height="6" transform="rotate(5 170.5 77.7)"/><rect x="175.8" y="77.2" width="5" height="3" transform="rotate(5 175.8 77.2)"/><rect x="198.3" y="76.8" width="4" height="5" transform="rotate(5 198.3 76.8)"/><rect x="202.7" y="77.4" width="8" height="3" transform="rotate(5 202.7 77.4)"/><rect x="212.2" y="78.5" width="6" height="4" transform="rotate(5 212.2 78.5)"/><rect x="216.8" y="79.3" width="5" height="3" transform="rotate(5 216.8 79.3)"/><rect x="225.9" y="77.3" width="6" height="4" transform="rotate(5 225.9 77.3)"/><rect x="231.1" y="78.0" width="5" height="3" transform="rotate(5 231.1 78.0)"/><rect x="245.5" y="79.5" width="3" height="8" transform="rotate(5 245.5 79.5)"/><rect x="258.8" y="76.6" width="6" height="6" transform="rotate(5 258.8 76.6)"/><rect x="274.4" y="77.8" width="10" height="5" transform="rotate(5 274.4 77.8)"/><rect x="280.2" y="78.8" width="5" height="3" transform="rotate(5 280.2 78.8)"/><rect x="287.1" y="78.2" width="6" height="5" transform="rotate(5 287.1 78.2)"/><rect x="295.7" y="78.5" width="4" height="5" transform="rotate(5 295.7 78.5)"/><rect x="308.5" y="77.7" width="5" height="6" transform="rotate(5 308.5 77.7)"/><rect x="315.6" y="78.9" width="5" height="5" transform="rotate(5 315.6 78.9)"/><rect x="322.3" y="77.7" width="8" height="6" transform="rotate(8 322.3 77.7)"/><rect x="350.9" y="78.7" width="10" height="3" transform="rotate(8 350.9 78.7)"/><rect x="359.0" y="78.7" width="8" height="4" transform="rotate(8 359.0 78.7)"/><rect x="370.6" y="78.8" width="5" height="3" transform="rotate(8 370.6 78.8)"/><rect x="392.1" y="76.7" width="8" height="6" transform="rotate(8 392.1 76.7)"/><rect x="413.6" y="77.1" width="10" height="6" transform="rotate(8 413.6 77.1)"/><rect x="421.3" y="76.7" width="6" height="10" transform="rotate(8 421.3 76.7)"/><rect x="434.0" y="79.2" width="5" height="4" transform="rotate(8 434.0 79.2)"/><rect x="442.0" y="76.7" width="4" height="6" transform="rotate(8 442.0 76.7)"/><rect x="449.7" y="79.4" width="7" height="6" transform="rotate(8 449.7 79.4)"/><rect x="455.4" y="79.0" width="8" height="6" transform="rotate(8 455.4 79.0)"/><rect x="462.3" y="78.9" width="3" height="8" transform="rotate(8 462.3 78.9)"/><rect x="471.5" y="76.7" width="3" height="4" transform="rotate(8 471.5 76.7)"/><rect x="476.4" y="79.3" width="8" height="3" transform="rotate(8 476.4 79.3)"/><rect x="-4.8" y="85.8" width="8" height="5" transform="rotate(35 -4.8 85.8)"/><rect x="9.5" y="85.3" width="12" height="6" transform="rotate(35 9.5 85.3)"/><rect x="14.6" y="83.7" width="6" height="5" transform="rotate(35 14.6 83.7)"/><rect x="20.7" y="86.1" width="10" height="3" transform="rotate(35 20.7 86.1)"/><rect x="36.1" y="83.9" width="8" height="5" transform="rotate(35 36.1 83.9)"/><rect x="42.2" y="83.6" width="10" height="4" transform="rotate(35 42.2 83.6)"/><rect x="49.1" y="84.7" width="10" height="6" transform="rotate(35 49.1 84.7)"/><rect x="55.9" y="84.6" width="4" height="8" transform="rotate(35 55.9 84.6)"/><rect x="63.8" y="84.7" width="4" height="5" transform="rotate(35 63.8 84.7)"/><rect x="70.6" y="84.2" width="4" height="6" transform="rotate(35 70.6 84.2)"/><rect x="91.1" y="83.8" width="6" height="5" transform="rotate(-27 91.1 83.8)"/><rect x="98.7" y="85.3" width="6" height="6" transform="rotate(-27 98.7 85.3)"/><rect x="111.7" y="84.8" width="3" height="4" transform="rotate(-27 111.7 84.8)"/><rect x="120.5" y="84.2" width="7" height="6" transform="rotate(-27 120.5 84.2)"/><rect x="126.8" y="84.3" width="4" height="6" transform="rotate(-27 126.8 84.3)"/><rect x="132.7" y="85.7" width="4" height="4" transform="rotate(-27 132.7 85.7)"/><rect x="141.8" y="86.0" width="6" height="4" transform="rotate(-27 141.8 86.0)"/><rect x="147.0" y="84.4" width="6" height="3" transform="rotate(-27 147.0 84.4)"/><rect x="162.5" y="86.3" width="8" height="3" transform="rotate(5 162.5 86.3)"/><rect x="168.0" y="84.8" width="6" height="10" transform="rotate(5 168.0 84.8)"/><rect x="175.3" y="85.6" width="5" height="3" transform="rotate(5 175.3 85.6)"/><rect x="183.1" y="86.1" width="7" height="4" transform="rotate(5 183.1 86.1)"/><rect x="190.1" y="85.7" width="3" height="7" transform="rotate(5 190.1 85.7)"/><rect x="197.4" y="84.8" width="3" height="4" transform="rotate(5 197.4 84.8)"/><rect x="202.8" y="85.8" width="6" height="3" transform="rotate(5 202.8 85.8)"/><rect x="211.1" y="84.4" width="4" height="4" transform="rotate(5 211.1 84.4)"/><rect x="225.1" y="86.3" width="10" height="3" transform="rotate(5 225.1 86.3)"/><rect x="232.9" y="85.4" width="6" height="5" transform="rotate(5 232.9 85.4)"/><rect x="238.1" y="85.0" width="8" height="3" transform="rotate(5 238.1 85.0)"/><rect x="254.4" y="85.8" width="8" height="6" transform="rotate(5 254.4 85.8)"/><rect x="265.6" y="84.9" width="8" height="3" transform="rotate(5 265.6 84.9)"/><rect x="274.0" y="85.6" width="10" height="3" transform="rotate(5 274.0 85.6)"/><rect x="281.3" y="85.0" width="3" height="7" transform="rotate(5 281.3 85.0)"/><rect x="296.0" y="85.6" width="5" height="5" transform="rotate(5 296.0 85.6)"/><rect x="301.0" y="85.0" width="5" height="5" transform="rotate(5 301.0 85.0)"/><rect x="308.1" y="84.0" width="10" height="3" transform="rotate(5 308.1 84.0)"/><rect x="344.7" y="85.3" width="4" height="10" transform="rotate(8 344.7 85.3)"/><rect x="373.1" y="85.4" width="4" height="5" transform="rotate(8 373.1 85.4)"/><rect x="378.1" y="85.8" width="5" height="4" transform="rotate(8 378.1 85.8)"/><rect x="387.0" y="85.7" width="5" height="5" transform="rotate(8 387.0 85.7)"/><rect x="401.2" y="85.2" width="10" height="6" transform="rotate(8 401.2 85.2)"/><rect x="413.9" y="84.8" width="6" height="6" transform="rotate(8 413.9 84.8)"/><rect x="419.9" y="84.8" width="3" height="6" transform="rotate(8 419.9 84.8)"/><rect x="427.9" y="86.3" width="10" height="6" transform="rotate(8 427.9 86.3)"/><rect x="434.0" y="85.5" width="5" height="4" transform="rotate(8 434.0 85.5)"/><rect x="443.2" y="84.4" width="4" height="3" transform="rotate(8 443.2 84.4)"/><rect x="447.7" y="84.3" width="6" height="5" transform="rotate(8 447.7 84.3)"/><rect x="455.1" y="83.5" width="3" height="4" transform="rotate(8 455.1 83.5)"/><rect x="463.3" y="85.3" width="4" height="5" transform="rotate(8 463.3 85.3)"/><rect x="470.1" y="84.4" width="5" height="6" transform="rotate(8 470.1 84.4)"/><rect x="476.6" y="85.3" width="6" height="3" transform="rotate(8 476.6 85.3)"/><rect x="-6.7" y="92.7" width="12" height="6" transform="rotate(35 -6.7 92.7)"/><rect x="8.9" y="91.6" width="6" height="4" transform="rotate(35 8.9 91.6)"/><rect x="35.2" y="91.6" width="12" height="3" transform="rotate(35 35.2 91.6)"/><rect x="42.4" y="92.2" width="5" height="5" transform="rotate(35 42.4 92.2)"/><rect x="56.5" y="92.5" width="5" height="3" transform="rotate(35 56.5 92.5)"/><rect x="70.6" y="91.4" width="5" height="4" transform="rotate(35 70.6 91.4)"/><rect x="78.2" y="91.0" width="5" height="6" transform="rotate(35 78.2 91.0)"/><rect x="84.4" y="93.4" width="3" height="5" transform="rotate(-27 84.4 93.4)"/><rect x="91.9" y="91.8" width="6" height="8" transform="rotate(-27 91.9 91.8)"/><rect x="97.9" y="92.9" width="6" height="3" transform="rotate(-27 97.9 92.9)"/><rect x="107.0" y="90.7" width="6" height="3" transform="rotate(-27 107.0 90.7)"/><rect x="113.4" y="91.1" width="4" height="6" transform="rotate(-27 113.4 91.1)"/><rect x="119.4" y="91.7" width="8" height="3" transform="rotate(-27 119.4 91.7)"/><rect x="133.9" y="92.3" width="7" height="4" transform="rotate(-27 133.9 92.3)"/><rect x="139.6" y="92.4" width="10" height="5" transform="rotate(-27 139.6 92.4)"/><rect x="148.4" y="91.0" width="7" height="3" transform="rotate(-27 148.4 91.0)"/><rect x="154.3" y="92.4" width="6" height="4" transform="rotate(-27 154.3 92.4)"/><rect x="162.3" y="92.1" width="6" height="3" transform="rotate(5 162.3 92.1)"/><rect x="169.5" y="92.2" width="6" height="6" transform="rotate(5 169.5 92.2)"/><rect x="175.7" y="92.0" width="6" height="6" transform="rotate(5 175.7 92.0)"/><rect x="183.4" y="90.9" width="7" height="6" transform="rotate(5 183.4 90.9)"/><rect x="188.5" y="91.6" width="6" height="3" transform="rotate(5 188.5 91.6)"/><rect x="196.9" y="90.5" width="6" height="3" transform="rotate(5 196.9 90.5)"/><rect x="210.9" y="93.2" width="4" height="4" transform="rotate(5 210.9 93.2)"/><rect x="224.8" y="91.4" width="7" height="5" transform="rotate(5 224.8 91.4)"/><rect x="230.6" y="92.1" width="6" height="5" transform="rotate(5 230.6 92.1)"/><rect x="239.6" y="93.3" width="10" height="6" transform="rotate(5 239.6 93.3)"/><rect x="245.6" y="92.1" width="4" height="6" transform="rotate(5 245.6 92.1)"/><rect x="252.2" y="91.6" width="3" height="6" transform="rotate(5 252.2 91.6)"/><rect x="266.5" y="93.3" width="6" height="3" transform="rotate(5 266.5 93.3)"/><rect x="273.8" y="93.0" width="6" height="10" transform="rotate(5 273.8 93.0)"/><rect x="281.6" y="93.3" width="10" height="5" transform="rotate(5 281.6 93.3)"/><rect x="289.5" y="90.7" width="5" height="5" transform="rotate(5 289.5 90.7)"/><rect x="296.3" y="91.2" width="5" height="3" transform="rotate(5 296.3 91.2)"/><rect x="303.2" y="93.3" width="4" height="4" transform="rotate(5 303.2 93.3)"/><rect x="315.4" y="91.0" width="8" height="3" transform="rotate(5 315.4 91.0)"/><rect x="343.6" y="90.7" width="3" height="7" transform="rotate(8 343.6 90.7)"/><rect x="351.0" y="93.4" width="3" height="8" transform="rotate(8 351.0 93.4)"/><rect x="380.4" y="90.9" width="7" height="3" transform="rotate(8 380.4 90.9)"/><rect x="386.2" y="92.5" width="5" height="3" transform="rotate(8 386.2 92.5)"/><rect x="393.7" y="90.8" width="6" height="3" transform="rotate(8 393.7 90.8)"/><rect x="399.5" y="91.0" width="10" height="3" transform="rotate(8 399.5 91.0)"/><rect x="407.4" y="93.3" width="4" height="8" transform="rotate(8 407.4 93.3)"/><rect x="420.0" y="92.5" width="5" height="3" transform="rotate(8 420.0 92.5)"/><rect x="435.4" y="91.8" width="4" height="4" transform="rotate(8 435.4 91.8)"/><rect x="441.9" y="90.8" width="4" height="6" transform="rotate(8 441.9 90.8)"/><rect x="447.7" y="92.1" width="7" height="6" transform="rotate(8 447.7 92.1)"/><rect x="456.5" y="93.3" width="6" height="6" transform="rotate(8 456.5 93.3)"/><rect x="463.7" y="91.6" width="5" height="4" transform="rotate(8 463.7 91.6)"/><rect x="476.9" y="92.2" width="7" height="5" transform="rotate(8 476.9 92.2)"/><rect x="-7.2" y="98.9" width="3" height="8" transform="rotate(35 -7.2 98.9)"/><rect x="0.1" y="99.2" width="6" height="5" transform="rotate(35 0.1 99.2)"/><rect x="13.5" y="97.6" width="12" height="6" transform="rotate(35 13.5 97.6)"/><rect x="23.0" y="100.1" width="5" height="5" transform="rotate(40 23.0 100.1)"/><rect x="28.5" y="98.5" width="5" height="4" transform="rotate(35 28.5 98.5)"/><rect x="34.7" y="99.3" width="6" height="8" transform="rotate(35 34.7 99.3)"/><rect x="43.8" y="97.8" width="5" height="8" transform="rotate(35 43.8 97.8)"/><rect x="57.1" y="98.7" width="8" height="4" transform="rotate(35 57.1 98.7)"/><rect x="71.3" y="97.6" width="8" height="3" transform="rotate(35 71.3 97.6)"/><rect x="92.6" y="97.5" width="5" height="3" transform="rotate(-27 92.6 97.5)"/><rect x="106.4" y="99.7" width="3" height="7" transform="rotate(-27 106.4 99.7)"/><rect x="112.3" y="99.8" width="4" height="5" transform="rotate(-27 112.3 99.8)"/><rect x="120.2" y="97.9" width="8" height="4" transform="rotate(-27 120.2 97.9)"/><rect x="126.7" y="100.5" width="8" height="3" transform="rotate(-20 126.7 100.5)"/><rect x="133.3" y="100.5" width="3" height="8" transform="rotate(-20 133.3 100.5)"/><rect x="142.1" y="100.4" width="7" height="6" transform="rotate(-20 142.1 100.4)"/><rect x="148.6" y="98.6" width="5" height="3" transform="rotate(-27 148.6 98.6)"/><rect x="153.9" y="98.4" width="4" height="4" transform="rotate(-27 153.9 98.4)"/><rect x="162.6" y="98.5" width="4" height="3" transform="rotate(-22 162.6 98.5)"/><rect x="176.4" y="100.2" width="3" height="7" transform="rotate(-22 176.4 100.2)"/><rect x="197.7" y="99.7" width="7" height="3" transform="rotate(-22 197.7 99.7)"/><rect x="202.8" y="100.2" width="3" height="5" transform="rotate(-22 202.8 100.2)"/><rect x="210.1" y="98.6" width="5" height="5" transform="rotate(-22 210.1 98.6)"/><rect x="217.8" y="97.7" width="7" height="3" transform="rotate(-22 217.8 97.7)"/><rect x="224.7" y="100.2" width="5" height="5" transform="rotate(-22 224.7 100.2)"/><rect x="231.4" y="98.5" width="6" height="6" transform="rotate(-22 231.4 98.5)"/><rect x="237.8" y="99.2" width="6" height="3" transform="rotate(-22 237.8 99.2)"/><rect x="246.4" y="97.8" width="8" height="5" transform="rotate(-22 246.4 97.8)"/><rect x="252.9" y="97.6" width="6" height="3" transform="rotate(-22 252.9 97.6)"/><rect x="261.5" y="100.5" width="8" height="5" transform="rotate(-22 261.5 100.5)"/><rect x="282.3" y="99.4" width="6" height="3" transform="rotate(-22 282.3 99.4)"/><rect x="294.6" y="98.3" width="4" height="3" transform="rotate(-22 294.6 98.3)"/><rect x="314.9" y="100.1" width="6" height="6" transform="rotate(-22 314.9 100.1)"/><rect x="321.6" y="99.6" width="8" height="5" transform="rotate(8 321.6 99.6)"/><rect x="335.9" y="99.1" width="6" height="4" transform="rotate(8 335.9 99.1)"/><rect x="345.2" y="100.1" width="7" height="3" transform="rotate(8 345.2 100.1)"/><rect x="373.0" y="98.9" width="5" height="10" transform="rotate(8 373.0 98.9)"/><rect x="379.1" y="97.6" width="5" height="3" transform="rotate(8 379.1 97.6)"/><rect x="400.1" y="100.5" width="8" height="4" transform="rotate(8 400.1 100.5)"/><rect x="414.6" y="98.8" width="6" height="7" transform="rotate(8 414.6 98.8)"/><rect x="427.4" y="98.9" width="5" height="3" transform="rotate(8 427.4 98.9)"/><rect x="433.8" y="97.8" width="4" height="4" transform="rotate(8 433.8 97.8)"/><rect x="441.1" y="99.4" width="10" height="3" transform="rotate(8 441.1 99.4)"/><rect x="447.8" y="98.4" width="10" height="5" transform="rotate(8 447.8 98.4)"/><rect x="464.0" y="99.1" width="6" height="3" transform="rotate(8 464.0 99.1)"/><rect x="471.3" y="99.7" width="4" height="5" transform="rotate(8 471.3 99.7)"/><rect x="476.0" y="99.5" width="5" height="5" transform="rotate(8 476.0 99.5)"/><rect x="-0.1" y="106.6" width="5" height="6" transform="rotate(40 -0.1 106.6)"/><rect x="8.9" y="107.3" width="12" height="3" transform="rotate(40 8.9 107.3)"/><rect x="13.7" y="105.4" width="5" height="5" transform="rotate(40 13.7 105.4)"/><rect x="22.5" y="107.2" width="10" height="6" transform="rotate(40 22.5 107.2)"/><rect x="28.5" y="105.9" width="4" height="5" transform="rotate(40 28.5 105.9)"/><rect x="34.6" y="105.6" width="4" height="5" transform="rotate(40 34.6 105.6)"/><rect x="50.5" y="104.7" width="6" height="10" transform="rotate(40 50.5 104.7)"/><rect x="63.9" y="104.7" width="4" height="10" transform="rotate(40 63.9 104.7)"/><rect x="70.1" y="107.1" width="10" height="6" transform="rotate(40 70.1 107.1)"/><rect x="77.6" y="106.7" width="12" height="4" transform="rotate(40 77.6 106.7)"/><rect x="84.1" y="106.1" width="5" height="6" transform="rotate(-20 84.1 106.1)"/><rect x="92.2" y="107.4" width="6" height="3" transform="rotate(-20 92.2 107.4)"/><rect x="99.0" y="104.9" width="4" height="5" transform="rotate(-20 99.0 104.9)"/><rect x="113.1" y="105.0" width="10" height="6" transform="rotate(-20 113.1 105.0)"/><rect x="121.0" y="107.3" width="6" height="6" transform="rotate(-20 121.0 107.3)"/><rect x="132.9" y="106.7" width="10" height="6" transform="rotate(-20 132.9 106.7)"/><rect x="139.9" y="106.3" width="10" height="5" transform="rotate(-20 139.9 106.3)"/><rect x="146.5" y="104.5" width="6" height="8" transform="rotate(-20 146.5 104.5)"/><rect x="154.9" y="105.5" width="10" height="6" transform="rotate(-20 154.9 105.5)"/><rect x="162.8" y="104.6" width="10" height="6" transform="rotate(-22 162.8 104.6)"/><rect x="169.5" y="107.5" width="7" height="6" transform="rotate(-22 169.5 107.5)"/><rect x="174.6" y="106.3" width="8" height="4" transform="rotate(-22 174.6 106.3)"/><rect x="181.7" y="105.5" width="6" height="5" transform="rotate(-22 181.7 105.5)"/><rect x="204.0" y="106.2" width="7" height="6" transform="rotate(-22 204.0 106.2)"/><rect x="210.7" y="105.4" width="5" height="7" transform="rotate(-22 210.7 105.4)"/><rect x="218.8" y="104.8" width="10" height="4" transform="rotate(-22 218.8 104.8)"/><rect x="238.6" y="104.6" width="5" height="5" transform="rotate(-22 238.6 104.6)"/><rect x="246.9" y="104.8" width="8" height="3" transform="rotate(-22 246.9 104.8)"/><rect x="251.7" y="107.2" width="5" height="6" transform="rotate(-22 251.7 107.2)"/><rect x="266.3" y="107.4" width="7" height="5" transform="rotate(-22 266.3 107.4)"/><rect x="275.0" y="105.9" width="5" height="4" transform="rotate(-22 275.0 105.9)"/><rect x="280.9" y="106.5" width="8" height="4" transform="rotate(-22 280.9 106.5)"/><rect x="289.4" y="106.0" width="6" height="4" transform="rotate(-22 289.4 106.0)"/><rect x="295.2" y="105.0" width="5" height="10" transform="rotate(-22 295.2 105.0)"/><rect x="300.6" y="106.5" width="6" height="10" transform="rotate(-22 300.6 106.5)"/><rect x="315.8" y="107.0" width="5" height="5" transform="rotate(-22 315.8 107.0)"/><rect x="322.6" y="104.6" width="6" height="6" transform="rotate(8 322.6 104.6)"/><rect x="335.6" y="105.5" width="8" height="3" transform="rotate(8 335.6 105.5)"/><rect x="349.9" y="105.4" width="3" height="7" transform="rotate(8 349.9 105.4)"/><rect x="359.1" y="105.4" width="3" height="8" transform="rotate(8 359.1 105.4)"/><rect x="380.3" y="104.6" width="8" height="5" transform="rotate(8 380.3 104.6)"/><rect x="387.1" y="104.7" width="10" height="3" transform="rotate(8 387.1 104.7)"/><rect x="399.7" y="106.6" width="4" height="4" transform="rotate(8 399.7 106.6)"/><rect x="408.0" y="107.2" width="3" height="8" transform="rotate(8 408.0 107.2)"/><rect x="427.1" y="106.7" width="7" height="3" transform="rotate(8 427.1 106.7)"/><rect x="436.2" y="105.3" width="4" height="8" transform="rotate(8 436.2 105.3)"/><rect x="449.2" y="105.9" width="5" height="5" transform="rotate(8 449.2 105.9)"/><rect x="468.7" y="106.3" width="4" height="3" transform="rotate(8 468.7 106.3)"/><rect x="477.7" y="105.4" width="8" height="5" transform="rotate(8 477.7 105.4)"/><rect x="-5.8" y="112.1" width="5" height="5" transform="rotate(40 -5.8 112.1)"/><rect x="1.8" y="114.5" width="6" height="4" transform="rotate(40 1.8 114.5)"/><rect x="6.5" y="114.0" width="12" height="4" transform="rotate(40 6.5 114.0)"/><rect x="15.0" y="112.7" width="10" height="6" transform="rotate(40 15.0 112.7)"/><rect x="21.5" y="114.2" width="5" height="5" transform="rotate(40 21.5 114.2)"/><rect x="29.5" y="113.5" width="10" height="3" transform="rotate(40 29.5 113.5)"/><rect x="35.4" y="114.2" width="6" height="5" transform="rotate(40 35.4 114.2)"/><rect x="44.1" y="114.1" width="12" height="3" transform="rotate(40 44.1 114.1)"/><rect x="50.1" y="112.6" width="8" height="6" transform="rotate(40 50.1 112.6)"/><rect x="57.8" y="112.3" width="10" height="3" transform="rotate(40 57.8 112.3)"/><rect x="63.4" y="114.1" width="8" height="5" transform="rotate(40 63.4 114.1)"/><rect x="70.4" y="114.3" width="5" height="4" transform="rotate(40 70.4 114.3)"/><rect x="77.3" y="113.4" width="3" height="12" transform="rotate(40 77.3 113.4)"/><rect x="91.3" y="113.2" width="4" height="5" transform="rotate(-20 91.3 113.2)"/><rect x="100.3" y="113.1" width="10" height="6" transform="rotate(-20 100.3 113.1)"/><rect x="106.1" y="113.8" width="3" height="8" transform="rotate(-20 106.1 113.8)"/><rect x="127.8" y="111.8" width="4" height="5" transform="rotate(-20 127.8 111.8)"/><rect x="134.9" y="111.9" width="5" height="10" transform="rotate(-20 134.9 111.9)"/><rect x="148.1" y="111.5" width="4" height="6" transform="rotate(-20 148.1 111.5)"/><rect x="169.2" y="111.8" width="10" height="3" transform="rotate(-22 169.2 111.8)"/><rect x="183.3" y="113.4" width="4" height="5" transform="rotate(-22 183.3 113.4)"/><rect x="191.4" y="112.9" width="4" height="5" transform="rotate(-22 191.4 112.9)"/><rect x="196.0" y="111.8" width="3" height="8" transform="rotate(-22 196.0 111.8)"/><rect x="210.4" y="112.0" width="3" height="7" transform="rotate(-22 210.4 112.0)"/><rect x="216.9" y="114.2" width="8" height="5" transform="rotate(-22 216.9 114.2)"/><rect x="225.8" y="113.9" width="6" height="5" transform="rotate(-22 225.8 113.9)"/><rect x="230.7" y="111.6" width="4" height="5" transform="rotate(-22 230.7 111.6)"/><rect x="245.9" y="113.6" width="3" height="6" transform="rotate(-22 245.9 113.6)"/><rect x="252.6" y="113.7" width="10" height="6" transform="rotate(-22 252.6 113.7)"/><rect x="266.5" y="113.0" width="4" height="7" transform="rotate(-22 266.5 113.0)"/><rect x="273.3" y="113.7" width="6" height="8" transform="rotate(-22 273.3 113.7)"/><rect x="281.7" y="113.5" width="7" height="3" transform="rotate(-22 281.7 113.5)"/><rect x="288.3" y="114.5" width="7" height="3" transform="rotate(-22 288.3 114.5)"/><rect x="293.9" y="112.8" width="8" height="3" transform="rotate(-22 293.9 112.8)"/><rect x="302.8" y="113.0" width="8" height="5" transform="rotate(-22 302.8 113.0)"/><rect x="314.5" y="114.1" width="6" height="6" transform="rotate(-22 314.5 114.1)"/><rect x="323.2" y="112.4" width="7" height="3" transform="rotate(8 323.2 112.4)"/><rect x="342.6" y="113.1" width="10" height="6" transform="rotate(8 342.6 113.1)"/><rect x="358.6" y="112.2" width="4" height="4" transform="rotate(8 358.6 112.2)"/><rect x="366.0" y="112.6" width="6" height="5" transform="rotate(8 366.0 112.6)"/><rect x="371.7" y="112.5" width="3" height="10" transform="rotate(8 371.7 112.5)"/><rect x="392.3" y="114.2" width="5" height="10" transform="rotate(8 392.3 114.2)"/><rect x="401.2" y="113.7" width="3" height="6" transform="rotate(8 401.2 113.7)"/><rect x="406.1" y="112.6" width="6" height="5" transform="rotate(8 406.1 112.6)"/><rect x="414.1" y="111.9" width="5" height="6" transform="rotate(8 414.1 111.9)"/><rect x="429.1" y="112.6" width="10" height="4" transform="rotate(8 429.1 112.6)"/><rect x="435.0" y="113.7" width="10" height="6" transform="rotate(8 435.0 113.7)"/><rect x="440.9" y="113.2" width="8" height="4" transform="rotate(8 440.9 113.2)"/><rect x="450.4" y="113.0" width="5" height="3" transform="rotate(8 450.4 113.0)"/><rect x="468.7" y="112.5" width="4" height="3" transform="rotate(8 468.7 112.5)"/><rect x="476.6" y="112.7" width="5" height="3" transform="rotate(8 476.6 112.7)"/><rect x="-5.8" y="119.2" width="8" height="5" transform="rotate(40 -5.8 119.2)"/><rect x="15.1" y="120.1" width="8" height="3" transform="rotate(40 15.1 120.1)"/><rect x="23.2" y="118.6" width="6" height="3" transform="rotate(40 23.2 118.6)"/><rect x="28.7" y="119.6" width="12" height="5" transform="rotate(40 28.7 119.6)"/><rect x="37.2" y="120.0" width="3" height="5" transform="rotate(40 37.2 120.0)"/><rect x="41.9" y="119.0" width="6" height="4" transform="rotate(40 41.9 119.0)"/><rect x="56.0" y="120.0" width="6" height="10" transform="rotate(40 56.0 120.0)"/><rect x="64.4" y="120.0" width="6" height="6" transform="rotate(40 64.4 120.0)"/><rect x="72.4" y="120.9" width="4" height="6" transform="rotate(40 72.4 120.9)"/><rect x="77.5" y="118.8" width="4" height="8" transform="rotate(40 77.5 118.8)"/><rect x="85.4" y="120.4" width="8" height="5" transform="rotate(-20 85.4 120.4)"/><rect x="92.2" y="120.6" width="5" height="3" transform="rotate(-20 92.2 120.6)"/><rect x="105.0" y="119.7" width="8" height="3" transform="rotate(-20 105.0 119.7)"/><rect x="112.1" y="120.5" width="8" height="3" transform="rotate(-20 112.1 120.5)"/><rect x="119.8" y="119.9" width="3" height="4" transform="rotate(-20 119.8 119.9)"/><rect x="134.3" y="121.2" width="8" height="6" transform="rotate(-20 134.3 121.2)"/><rect x="142.2" y="120.7" width="6" height="3" transform="rotate(-20 142.2 120.7)"/><rect x="147.6" y="119.7" width="3" height="5" transform="rotate(-20 147.6 119.7)"/><rect x="153.8" y="121.4" width="5" height="3" transform="rotate(-20 153.8 121.4)"/><rect x="162.9" y="118.6" width="3" height="8" transform="rotate(-22 162.9 118.6)"/><rect x="175.8" y="120.8" width="7" height="6" transform="rotate(-22 175.8 120.8)"/><rect x="188.8" y="121.2" width="4" height="6" transform="rotate(-22 188.8 121.2)"/><rect x="196.1" y="120.0" width="3" height="4" transform="rotate(-22 196.1 120.0)"/><rect x="204.0" y="120.7" width="4" height="5" transform="rotate(-22 204.0 120.7)"/><rect x="209.8" y="120.6" width="5" height="6" transform="rotate(-22 209.8 120.6)"/><rect x="231.9" y="120.1" width="10" height="4" transform="rotate(-22 231.9 120.1)"/><rect x="240.3" y="120.8" width="5" height="4" transform="rotate(-22 240.3 120.8)"/><rect x="244.6" y="119.0" width="10" height="4" transform="rotate(-22 244.6 119.0)"/><rect x="260.5" y="119.8" width="3" height="7" transform="rotate(-22 260.5 119.8)"/><rect x="266.1" y="121.1" width="6" height="8" transform="rotate(-22 266.1 121.1)"/><rect x="289.0" y="121.4" width="5" height="4" transform="rotate(-22 289.0 121.4)"/><rect x="293.7" y="121.4" width="5" height="4" transform="rotate(-22 293.7 121.4)"/><rect x="302.7" y="120.0" width="5" height="7" transform="rotate(-22 302.7 120.0)"/><rect x="308.1" y="120.8" width="3" height="5" transform="rotate(-22 308.1 120.8)"/><rect x="317.4" y="119.0" width="8" height="3" transform="rotate(-22 317.4 119.0)"/><rect x="324.3" y="119.8" width="10" height="3" transform="rotate(8 324.3 119.8)"/><rect x="329.4" y="119.5" width="5" height="5" transform="rotate(8 329.4 119.5)"/><rect x="337.6" y="119.6" width="4" height="3" transform="rotate(8 337.6 119.6)"/><rect x="352.4" y="120.2" width="3" height="8" transform="rotate(8 352.4 120.2)"/><rect x="357.4" y="121.0" width="5" height="3" transform="rotate(8 357.4 121.0)"/><rect x="373.5" y="120.6" width="5" height="4" transform="rotate(8 373.5 120.6)"/><rect x="379.5" y="121.4" width="4" height="10" transform="rotate(8 379.5 121.4)"/><rect x="387.2" y="119.4" width="10" height="6" transform="rotate(8 387.2 119.4)"/><rect x="399.5" y="121.5" width="5" height="3" transform="rotate(8 399.5 121.5)"/><rect x="407.6" y="119.6" width="4" height="3" transform="rotate(8 407.6 119.6)"/><rect x="415.1" y="119.5" width="5" height="3" transform="rotate(8 415.1 119.5)"/><rect x="422.5" y="118.7" width="4" height="4" transform="rotate(8 422.5 118.7)"/><rect x="435.7" y="118.9" width="6" height="4" transform="rotate(8 435.7 118.9)"/><rect x="440.6" y="119.5" width="5" height="10" transform="rotate(8 440.6 119.5)"/><rect x="464.1" y="118.9" width="4" height="4" transform="rotate(8 464.1 118.9)"/><rect x="469.1" y="120.0" width="7" height="6" transform="rotate(8 469.1 120.0)"/><rect x="-5.5" y="127.4" width="5" height="10" transform="rotate(40 -5.5 127.4)"/><rect x="14.3" y="128.2" width="4" height="10" transform="rotate(40 14.3 128.2)"/><rect x="22.5" y="128.5" width="12" height="5" transform="rotate(40 22.5 128.5)"/><rect x="29.7" y="126.7" width="6" height="3" transform="rotate(40 29.7 126.7)"/><rect x="35.5" y="127.9" width="6" height="5" transform="rotate(40 35.5 127.9)"/><rect x="44.0" y="126.6" width="6" height="4" transform="rotate(40 44.0 126.6)"/><rect x="58.3" y="127.3" width="4" height="6" transform="rotate(40 58.3 127.3)"/><rect x="71.7" y="127.2" width="5" height="5" transform="rotate(40 71.7 127.2)"/><rect x="83.8" y="125.9" width="10" height="3" transform="rotate(-20 83.8 125.9)"/><rect x="91.4" y="126.3" width="5" height="6" transform="rotate(-20 91.4 126.3)"/><rect x="112.1" y="128.2" width="6" height="4" transform="rotate(-20 112.1 128.2)"/><rect x="120.4" y="128.4" width="5" height="6" transform="rotate(-20 120.4 128.4)"/><rect x="126.4" y="127.0" width="5" height="6" transform="rotate(-20 126.4 127.0)"/><rect x="133.2" y="128.3" width="10" height="3" transform="rotate(-20 133.2 128.3)"/><rect x="140.3" y="126.6" width="6" height="6" transform="rotate(-20 140.3 126.6)"/><rect x="146.6" y="126.7" width="7" height="4" transform="rotate(-20 146.6 126.7)"/><rect x="167.9" y="126.6" width="10" height="3" transform="rotate(-22 167.9 126.6)"/><rect x="175.1" y="128.0" width="8" height="3" transform="rotate(-22 175.1 128.0)"/><rect x="191.3" y="126.6" width="7" height="3" transform="rotate(-22 191.3 126.6)"/><rect x="198.1" y="126.7" width="6" height="3" transform="rotate(-22 198.1 126.7)"/><rect x="204.5" y="127.4" width="10" height="3" transform="rotate(-22 204.5 127.4)"/><rect x="211.8" y="126.7" width="5" height="6" transform="rotate(-22 211.8 126.7)"/><rect x="224.1" y="126.1" width="8" height="4" transform="rotate(-22 224.1 126.1)"/><rect x="261.3" y="126.7" width="4" height="6" transform="rotate(-22 261.3 126.7)"/><rect x="267.3" y="128.4" width="3" height="6" transform="rotate(-22 267.3 128.4)"/><rect x="274.0" y="128.1" width="5" height="8" transform="rotate(-22 274.0 128.1)"/><rect x="279.9" y="126.2" width="7" height="6" transform="rotate(-22 279.9 126.2)"/><rect x="296.3" y="126.2" width="7" height="3" transform="rotate(-22 296.3 126.2)"/><rect x="300.9" y="125.6" width="8" height="3" transform="rotate(-22 300.9 125.6)"/><rect x="317.3" y="128.4" width="10" height="3" transform="rotate(-22 317.3 128.4)"/><rect x="323.8" y="127.2" width="4" height="3" transform="rotate(8 323.8 127.2)"/><rect x="329.5" y="125.7" width="7" height="3" transform="rotate(8 329.5 125.7)"/><rect x="335.7" y="126.9" width="7" height="5" transform="rotate(8 335.7 126.9)"/><rect x="351.5" y="126.4" width="7" height="5" transform="rotate(8 351.5 126.4)"/><rect x="392.3" y="128.5" width="4" height="4" transform="rotate(8 392.3 128.5)"/><rect x="399.7" y="126.1" width="4" height="3" transform="rotate(8 399.7 126.1)"/><rect x="407.1" y="126.4" width="8" height="5" transform="rotate(8 407.1 126.4)"/><rect x="415.5" y="128.1" width="6" height="7" transform="rotate(8 415.5 128.1)"/><rect x="426.6" y="126.4" width="10" height="5" transform="rotate(8 426.6 126.4)"/><rect x="435.6" y="127.5" width="10" height="3" transform="rotate(8 435.6 127.5)"/><rect x="442.9" y="126.0" width="4" height="10" transform="rotate(8 442.9 126.0)"/><rect x="449.2" y="128.2" width="10" height="5" transform="rotate(8 449.2 128.2)"/><rect x="456.3" y="126.9" width="3" height="8" transform="rotate(8 456.3 126.9)"/><rect x="463.9" y="127.1" width="8" height="4" transform="rotate(8 463.9 127.1)"/><rect x="476.2" y="125.5" width="4" height="3" transform="rotate(8 476.2 125.5)"/><rect x="0.8" y="135.1" width="6" height="10" transform="rotate(40 0.8 135.1)"/><rect x="6.9" y="134.2" width="5" height="6" transform="rotate(40 6.9 134.2)"/><rect x="15.7" y="135.4" width="6" height="6" transform="rotate(40 15.7 135.4)"/><rect x="43.4" y="133.2" width="6" height="8" transform="rotate(40 43.4 133.2)"/><rect x="49.7" y="134.4" width="5" height="4" transform="rotate(40 49.7 134.4)"/><rect x="57.4" y="132.7" width="3" height="6" transform="rotate(40 57.4 132.7)"/><rect x="64.2" y="134.5" width="5" height="6" transform="rotate(40 64.2 134.5)"/><rect x="85.1" y="133.8" width="3" height="5" transform="rotate(-20 85.1 133.8)"/><rect x="93.1" y="132.6" width="8" height="3" transform="rotate(-20 93.1 132.6)"/><rect x="99.9" y="134.1" width="4" height="6" transform="rotate(-20 99.9 134.1)"/><rect x="125.7" y="133.3" width="6" height="5" transform="rotate(-20 125.7 133.3)"/><rect x="132.9" y="133.2" width="3" height="4" transform="rotate(-20 132.9 133.2)"/><rect x="162.6" y="134.2" width="3" height="8" transform="rotate(-22 162.6 134.2)"/><rect x="167.6" y="134.0" width="10" height="5" transform="rotate(-22 167.6 134.0)"/><rect x="191.5" y="133.2" width="3" height="8" transform="rotate(-22 191.5 133.2)"/><rect x="202.6" y="133.2" width="4" height="10" transform="rotate(-22 202.6 133.2)"/><rect x="218.4" y="134.6" width="4" height="4" transform="rotate(-22 218.4 134.6)"/><rect x="226.1" y="133.0" width="8" height="4" transform="rotate(-22 226.1 133.0)"/><rect x="268.0" y="133.7" width="3" height="10" transform="rotate(-22 268.0 133.7)"/><rect x="273.2" y="133.1" width="10" height="3" transform="rotate(-22 273.2 133.1)"/><rect x="287.4" y="133.8" width="10" height="5" transform="rotate(-22 287.4 133.8)"/><rect x="296.4" y="134.4" width="8" height="5" transform="rotate(-22 296.4 134.4)"/><rect x="302.2" y="134.4" width="8" height="3" transform="rotate(-22 302.2 134.4)"/><rect x="315.3" y="133.3" width="6" height="10" transform="rotate(-22 315.3 133.3)"/><rect x="344.1" y="135.0" width="10" height="3" transform="rotate(8 344.1 135.0)"/><rect x="352.4" y="132.7" width="7" height="4" transform="rotate(8 352.4 132.7)"/><rect x="370.8" y="132.6" width="4" height="3" transform="rotate(8 370.8 132.6)"/><rect x="406.5" y="134.8" width="10" height="5" transform="rotate(8 406.5 134.8)"/><rect x="414.2" y="133.8" width="4" height="4" transform="rotate(8 414.2 133.8)"/><rect x="421.8" y="132.8" width="4" height="10" transform="rotate(8 421.8 132.8)"/><rect x="428.2" y="134.6" width="8" height="5" transform="rotate(8 428.2 134.6)"/><rect x="450.0" y="134.8" width="4" height="8" transform="rotate(8 450.0 134.8)"/><rect x="463.5" y="134.0" width="4" height="4" transform="rotate(8 463.5 134.0)"/><rect x="478.2" y="135.0" width="3" height="8" transform="rotate(8 478.2 135.0)"/><rect x="-4.9" y="141.1" width="6" height="12" transform="rotate(40 -4.9 141.1)"/><rect x="2.5" y="141.7" width="4" height="12" transform="rotate(40 2.5 141.7)"/><rect x="7.3" y="141.7" width="6" height="8" transform="rotate(40 7.3 141.7)"/><rect x="14.5" y="140.4" width="6" height="5" transform="rotate(40 14.5 140.4)"/><rect x="23.0" y="140.2" width="5" height="6" transform="rotate(40 23.0 140.2)"/><rect x="28.1" y="139.7" width="8" height="3" transform="rotate(40 28.1 139.7)"/><rect x="49.0" y="140.9" width="5" height="12" transform="rotate(40 49.0 140.9)"/><rect x="57.4" y="140.9" width="5" height="6" transform="rotate(40 57.4 140.9)"/><rect x="64.0" y="141.5" width="6" height="4" transform="rotate(40 64.0 141.5)"/><rect x="71.8" y="141.7" width="12" height="5" transform="rotate(40 71.8 141.7)"/><rect x="77.5" y="140.1" width="5" height="12" transform="rotate(40 77.5 140.1)"/><rect x="85.9" y="140.5" width="6" height="6" transform="rotate(-20 85.9 140.5)"/><rect x="93.2" y="139.6" width="8" height="5" transform="rotate(-20 93.2 139.6)"/><rect x="135.5" y="141.5" width="6" height="3" transform="rotate(-20 135.5 141.5)"/><rect x="153.9" y="142.5" width="6" height="7" transform="rotate(-20 153.9 142.5)"/><rect x="162.3" y="140.2" width="6" height="3" transform="rotate(-22 162.3 140.2)"/><rect x="168.3" y="141.6" width="3" height="10" transform="rotate(-22 168.3 141.6)"/><rect x="181.6" y="141.2" width="10" height="3" transform="rotate(-22 181.6 141.2)"/><rect x="191.1" y="142.3" width="3" height="6" transform="rotate(-22 191.1 142.3)"/><rect x="196.6" y="139.6" width="7" height="5" transform="rotate(-22 196.6 139.6)"/><rect x="204.1" y="141.1" width="3" height="8" transform="rotate(-22 204.1 141.1)"/><rect x="211.6" y="142.5" width="10" height="3" transform="rotate(-22 211.6 142.5)"/><rect x="216.7" y="139.9" width="10" height="6" transform="rotate(-22 216.7 139.9)"/><rect x="224.3" y="141.2" width="5" height="4" transform="rotate(-22 224.3 141.2)"/><rect x="232.4" y="140.4" width="6" height="5" transform="rotate(-22 232.4 140.4)"/><rect x="238.7" y="140.9" width="3" height="7" transform="rotate(-22 238.7 140.9)"/><rect x="253.8" y="140.5" width="3" height="6" transform="rotate(-22 253.8 140.5)"/><rect x="260.1" y="141.8" width="7" height="5" transform="rotate(-22 260.1 141.8)"/><rect x="274.0" y="141.8" width="7" height="3" transform="rotate(-22 274.0 141.8)"/><rect x="282.5" y="142.2" width="7" height="5" transform="rotate(-22 282.5 142.2)"/><rect x="287.9" y="139.7" width="5" height="5" transform="rotate(-22 287.9 139.7)"/><rect x="309.8" y="141.8" width="6" height="3" transform="rotate(-22 309.8 141.8)"/><rect x="316.9" y="141.5" width="6" height="10" transform="rotate(-22 316.9 141.5)"/><rect x="322.0" y="139.6" width="6" height="5" transform="rotate(8 322.0 139.6)"/><rect x="328.8" y="141.4" width="3" height="7" transform="rotate(8 328.8 141.4)"/><rect x="336.7" y="140.2" width="6" height="7" transform="rotate(8 336.7 140.2)"/><rect x="343.3" y="141.7" width="8" height="5" transform="rotate(8 343.3 141.7)"/><rect x="364.7" y="139.9" width="3" height="6" transform="rotate(8 364.7 139.9)"/><rect x="372.6" y="141.4" width="10" height="4" transform="rotate(8 372.6 141.4)"/><rect x="392.1" y="139.8" width="7" height="5" transform="rotate(8 392.1 139.8)"/><rect x="400.1" y="140.0" width="5" height="4" transform="rotate(8 400.1 140.0)"/><rect x="420.3" y="140.9" width="10" height="3" transform="rotate(8 420.3 140.9)"/><rect x="433.5" y="141.0" width="6" height="6" transform="rotate(8 433.5 141.0)"/><rect x="449.1" y="140.7" width="3" height="6" transform="rotate(8 449.1 140.7)"/><rect x="454.9" y="142.2" width="6" height="7" transform="rotate(8 454.9 142.2)"/><rect x="461.7" y="139.6" width="4" height="6" transform="rotate(8 461.7 139.6)"/><rect x="471.2" y="139.7" width="3" height="5" transform="rotate(8 471.2 139.7)"/><rect x="-0.3" y="148.2" width="6" height="10" transform="rotate(40 -0.3 148.2)"/><rect x="6.9" y="148.2" width="8" height="6" transform="rotate(40 6.9 148.2)"/><rect x="14.0" y="147.1" width="12" height="5" transform="rotate(40 14.0 147.1)"/><rect x="22.9" y="147.6" width="6" height="5" transform="rotate(40 22.9 147.6)"/><rect x="29.4" y="147.4" width="6" height="5" transform="rotate(40 29.4 147.4)"/><rect x="37.0" y="147.7" width="8" height="4" transform="rotate(40 37.0 147.7)"/><rect x="41.9" y="147.1" width="8" height="5" transform="rotate(40 41.9 147.1)"/><rect x="48.9" y="147.6" width="10" height="4" transform="rotate(40 48.9 147.6)"/><rect x="56.2" y="147.3" width="10" height="3" transform="rotate(40 56.2 147.3)"/><rect x="63.5" y="146.9" width="4" height="6" transform="rotate(40 63.5 146.9)"/><rect x="69.5" y="149.0" width="5" height="4" transform="rotate(40 69.5 149.0)"/><rect x="86.0" y="146.6" width="4" height="12" transform="rotate(-20 86.0 146.6)"/><rect x="126.0" y="147.3" width="6" height="4" transform="rotate(-20 126.0 147.3)"/><rect x="162.5" y="146.8" width="3" height="10" transform="rotate(-22 162.5 146.8)"/><rect x="170.5" y="148.2" width="4" height="5" transform="rotate(-22 170.5 148.2)"/><rect x="177.0" y="147.5" width="5" height="4" transform="rotate(-22 177.0 147.5)"/><rect x="182.1" y="149.4" width="4" height="6" transform="rotate(-22 182.1 149.4)"/><rect x="189.1" y="146.9" width="5" height="3" transform="rotate(-22 189.1 146.9)"/><rect x="203.3" y="146.7" width="3" height="10" transform="rotate(-22 203.3 146.7)"/><rect x="212.3" y="147.0" width="7" height="4" transform="rotate(-22 212.3 147.0)"/><rect x="217.0" y="147.5" width="5" height="4" transform="rotate(-22 217.0 147.5)"/><rect x="238.7" y="148.8" width="4" height="6" transform="rotate(-22 238.7 148.8)"/><rect x="259.4" y="148.0" width="8" height="3" transform="rotate(-22 259.4 148.0)"/><rect x="275.2" y="147.4" width="3" height="6" transform="rotate(-22 275.2 147.4)"/><rect x="280.7" y="149.4" width="6" height="6" transform="rotate(-22 280.7 149.4)"/><rect x="300.7" y="148.9" width="5" height="5" transform="rotate(-22 300.7 148.9)"/><rect x="308.5" y="149.2" width="8" height="4" transform="rotate(-22 308.5 149.2)"/><rect x="316.1" y="149.1" width="10" height="5" transform="rotate(-22 316.1 149.1)"/><rect x="337.9" y="148.7" width="3" height="8" transform="rotate(8 337.9 148.7)"/><rect x="345.4" y="148.4" width="8" height="4" transform="rotate(8 345.4 148.4)"/><rect x="351.2" y="148.2" width="5" height="5" transform="rotate(8 351.2 148.2)"/><rect x="358.0" y="147.0" width="5" height="8" transform="rotate(8 358.0 147.0)"/><rect x="365.4" y="147.1" width="3" height="8" transform="rotate(8 365.4 147.1)"/><rect x="385.1" y="147.0" width="6" height="5" transform="rotate(8 385.1 147.0)"/><rect x="392.0" y="147.1" width="3" height="7" transform="rotate(8 392.0 147.1)"/><rect x="398.9" y="147.0" width="4" height="4" transform="rotate(8 398.9 147.0)"/><rect x="406.8" y="148.8" width="5" height="3" transform="rotate(8 406.8 148.8)"/><rect x="413.8" y="148.1" width="3" height="5" transform="rotate(8 413.8 148.1)"/><rect x="457.0" y="148.0" width="6" height="5" transform="rotate(8 457.0 148.0)"/><rect x="463.2" y="149.2" width="5" height="4" transform="rotate(8 463.2 149.2)"/><rect x="-6.3" y="155.3" width="4" height="10" transform="rotate(40 -6.3 155.3)"/><rect x="9.4" y="156.2" width="6" height="4" transform="rotate(40 9.4 156.2)"/><rect x="15.1" y="154.4" width="6" height="5" transform="rotate(40 15.1 154.4)"/><rect x="20.7" y="155.6" width="8" height="4" transform="rotate(40 20.7 155.6)"/><rect x="28.3" y="156.3" width="10" height="3" transform="rotate(40 28.3 156.3)"/><rect x="50.6" y="155.7" width="6" height="3" transform="rotate(40 50.6 155.7)"/><rect x="57.9" y="154.2" width="3" height="6" transform="rotate(40 57.9 154.2)"/><rect x="64.4" y="153.9" width="12" height="4" transform="rotate(40 64.4 153.9)"/><rect x="69.6" y="154.4" width="4" height="10" transform="rotate(40 69.6 154.4)"/><rect x="77.7" y="153.5" width="5" height="12" transform="rotate(40 77.7 153.5)"/><rect x="83.7" y="154.0" width="3" height="6" transform="rotate(-20 83.7 154.0)"/><rect x="112.3" y="154.8" width="10" height="3" transform="rotate(-20 112.3 154.8)"/><rect x="119.9" y="154.6" width="8" height="3" transform="rotate(-20 119.9 154.6)"/><rect x="154.1" y="154.5" width="6" height="6" transform="rotate(-20 154.1 154.5)"/><rect x="161.1" y="153.8" width="7" height="6" transform="rotate(-22 161.1 153.8)"/><rect x="181.7" y="153.9" width="5" height="5" transform="rotate(-22 181.7 153.9)"/><rect x="191.1" y="153.9" width="3" height="4" transform="rotate(-22 191.1 153.9)"/><rect x="197.2" y="154.6" width="10" height="3" transform="rotate(-22 197.2 154.6)"/><rect x="202.7" y="154.8" width="4" height="7" transform="rotate(-22 202.7 154.8)"/><rect x="210.4" y="156.1" width="8" height="6" transform="rotate(-22 210.4 156.1)"/><rect x="224.9" y="155.4" width="3" height="6" transform="rotate(-22 224.9 155.4)"/><rect x="231.8" y="156.3" width="3" height="7" transform="rotate(-22 231.8 156.3)"/><rect x="245.8" y="154.4" width="8" height="3" transform="rotate(-22 245.8 154.4)"/><rect x="254.1" y="156.0" width="6" height="10" transform="rotate(-22 254.1 156.0)"/><rect x="266.1" y="154.6" width="8" height="6" transform="rotate(-22 266.1 154.6)"/><rect x="288.7" y="154.5" width="3" height="8" transform="rotate(-22 288.7 154.5)"/><rect x="301.1" y="155.5" width="3" height="10" transform="rotate(-22 301.1 155.5)"/><rect x="310.1" y="155.7" width="3" height="6" transform="rotate(-22 310.1 155.7)"/><rect x="316.3" y="154.6" width="8" height="3" transform="rotate(-22 316.3 154.6)"/><rect x="331.5" y="155.9" width="5" height="5" transform="rotate(8 331.5 155.9)"/><rect x="351.0" y="153.9" width="7" height="6" transform="rotate(8 351.0 153.9)"/><rect x="358.0" y="154.2" width="6" height="10" transform="rotate(8 358.0 154.2)"/><rect x="366.0" y="154.2" width="3" height="7" transform="rotate(8 366.0 154.2)"/><rect x="406.7" y="153.6" width="7" height="3" transform="rotate(8 406.7 153.6)"/><rect x="412.9" y="154.2" width="5" height="6" transform="rotate(8 412.9 154.2)"/><rect x="449.9" y="156.0" width="5" height="3" transform="rotate(8 449.9 156.0)"/><rect x="455.5" y="154.4" width="7" height="6" transform="rotate(8 455.5 154.4)"/><rect x="462.7" y="154.1" width="6" height="8" transform="rotate(8 462.7 154.1)"/><rect x="469.0" y="155.1" width="5" height="10" transform="rotate(8 469.0 155.1)"/><rect x="-5.6" y="162.3" width="6" height="6" transform="rotate(40 -5.6 162.3)"/><rect x="1.6" y="161.9" width="5" height="6" transform="rotate(40 1.6 161.9)"/><rect x="16.3" y="161.6" width="12" height="6" transform="rotate(40 16.3 161.6)"/><rect x="21.6" y="163.4" width="5" height="6" transform="rotate(40 21.6 163.4)"/><rect x="34.7" y="161.8" width="5" height="6" transform="rotate(40 34.7 161.8)"/><rect x="43.3" y="163.3" width="6" height="6" transform="rotate(40 43.3 163.3)"/><rect x="51.2" y="162.9" width="4" height="12" transform="rotate(40 51.2 162.9)"/><rect x="57.2" y="160.8" width="5" height="8" transform="rotate(40 57.2 160.8)"/><rect x="72.0" y="161.9" width="12" height="6" transform="rotate(40 72.0 161.9)"/><rect x="78.9" y="161.5" width="5" height="6" transform="rotate(40 78.9 161.5)"/><rect x="84.7" y="162.7" width="4" height="10" transform="rotate(-20 84.7 162.7)"/><rect x="91.9" y="161.6" width="8" height="5" transform="rotate(-20 91.9 161.6)"/><rect x="97.9" y="162.1" width="3" height="8" transform="rotate(-20 97.9 162.1)"/><rect x="106.7" y="162.3" width="6" height="5" transform="rotate(-20 106.7 162.3)"/><rect x="121.3" y="162.8" width="3" height="7" transform="rotate(-20 121.3 162.8)"/><rect x="140.8" y="162.4" width="6" height="4" transform="rotate(-20 140.8 162.4)"/><rect x="147.8" y="162.1" width="10" height="4" transform="rotate(-20 147.8 162.1)"/><rect x="162.7" y="160.9" width="4" height="7" transform="rotate(-22 162.7 160.9)"/><rect x="169.0" y="161.5" width="6" height="6" transform="rotate(-22 169.0 161.5)"/><rect x="174.9" y="161.0" width="6" height="4" transform="rotate(-22 174.9 161.0)"/><rect x="182.3" y="161.1" width="6" height="6" transform="rotate(-22 182.3 161.1)"/><rect x="198.4" y="161.0" width="3" height="7" transform="rotate(-22 198.4 161.0)"/><rect x="203.0" y="162.5" width="3" height="7" transform="rotate(-22 203.0 162.5)"/><rect x="218.2" y="162.8" width="10" height="5" transform="rotate(-22 218.2 162.8)"/><rect x="224.2" y="162.0" width="5" height="5" transform="rotate(-22 224.2 162.0)"/><rect x="232.4" y="161.2" width="8" height="4" transform="rotate(-22 232.4 161.2)"/><rect x="240.4" y="161.6" width="3" height="5" transform="rotate(-22 240.4 161.6)"/><rect x="245.2" y="162.0" width="7" height="3" transform="rotate(-22 245.2 162.0)"/><rect x="266.6" y="161.1" width="8" height="3" transform="rotate(-22 266.6 161.1)"/><rect x="282.0" y="162.1" width="3" height="5" transform="rotate(-22 282.0 162.1)"/><rect x="286.9" y="162.2" width="5" height="6" transform="rotate(-22 286.9 162.2)"/><rect x="322.7" y="161.9" width="5" height="3" transform="rotate(8 322.7 161.9)"/><rect x="337.2" y="163.1" width="4" height="7" transform="rotate(8 337.2 163.1)"/><rect x="344.6" y="161.1" width="6" height="7" transform="rotate(8 344.6 161.1)"/><rect x="352.3" y="161.7" width="3" height="8" transform="rotate(8 352.3 161.7)"/><rect x="357.5" y="162.5" width="6" height="6" transform="rotate(8 357.5 162.5)"/><rect x="364.4" y="161.1" width="6" height="6" transform="rotate(8 364.4 161.1)"/><rect x="371.1" y="161.7" width="6" height="5" transform="rotate(8 371.1 161.7)"/><rect x="386.4" y="162.1" width="3" height="8" transform="rotate(8 386.4 162.1)"/><rect x="391.7" y="161.0" width="6" height="6" transform="rotate(8 391.7 161.0)"/><rect x="401.3" y="163.1" width="4" height="6" transform="rotate(8 401.3 163.1)"/><rect x="413.8" y="162.1" width="10" height="6" transform="rotate(8 413.8 162.1)"/><rect x="419.6" y="160.7" width="7" height="4" transform="rotate(8 419.6 160.7)"/><rect x="435.7" y="163.1" width="4" height="3" transform="rotate(8 435.7 163.1)"/><rect x="441.0" y="162.9" width="3" height="6" transform="rotate(8 441.0 162.9)"/><rect x="448.3" y="161.6" width="4" height="5" transform="rotate(8 448.3 161.6)"/><rect x="456.7" y="160.9" width="3" height="10" transform="rotate(8 456.7 160.9)"/><rect x="464.0" y="162.8" width="4" height="3" transform="rotate(8 464.0 162.8)"/><rect x="469.8" y="162.9" width="4" height="6" transform="rotate(8 469.8 162.9)"/><rect x="-7.2" y="168.3" width="10" height="5" transform="rotate(40 -7.2 168.3)"/><rect x="6.6" y="169.9" width="8" height="3" transform="rotate(40 6.6 169.9)"/><rect x="16.2" y="167.9" width="6" height="6" transform="rotate(40 16.2 167.9)"/><rect x="30.1" y="168.3" width="8" height="6" transform="rotate(40 30.1 168.3)"/><rect x="36.8" y="169.3" width="10" height="4" transform="rotate(40 36.8 169.3)"/><rect x="42.3" y="168.9" width="6" height="5" transform="rotate(40 42.3 168.9)"/><rect x="51.0" y="167.8" width="3" height="12" transform="rotate(40 51.0 167.8)"/><rect x="58.1" y="168.1" width="10" height="6" transform="rotate(40 58.1 168.1)"/><rect x="63.2" y="169.8" width="10" height="6" transform="rotate(40 63.2 169.8)"/><rect x="78.6" y="167.6" width="4" height="12" transform="rotate(40 78.6 167.6)"/><rect x="107.4" y="169.4" width="8" height="3" transform="rotate(-20 107.4 169.4)"/><rect x="112.7" y="170.2" width="5" height="6" transform="rotate(-20 112.7 170.2)"/><rect x="127.8" y="170.1" width="4" height="5" transform="rotate(-20 127.8 170.1)"/><rect x="134.4" y="170.3" width="8" height="3" transform="rotate(-20 134.4 170.3)"/><rect x="148.9" y="169.2" width="7" height="4" transform="rotate(-20 148.9 169.2)"/><rect x="155.6" y="169.2" width="4" height="5" transform="rotate(-20 155.6 169.2)"/><rect x="163.2" y="168.3" width="4" height="4" transform="rotate(-22 163.2 168.3)"/><rect x="175.8" y="168.3" width="7" height="5" transform="rotate(-22 175.8 168.3)"/><rect x="183.4" y="167.6" width="3" height="4" transform="rotate(-22 183.4 167.6)"/><rect x="190.5" y="168.2" width="10" height="3" transform="rotate(-22 190.5 168.2)"/><rect x="197.0" y="170.3" width="5" height="5" transform="rotate(-22 197.0 170.3)"/><rect x="205.4" y="169.4" width="3" height="4" transform="rotate(-22 205.4 169.4)"/><rect x="225.9" y="167.9" width="6" height="3" transform="rotate(-22 225.9 167.9)"/><rect x="232.7" y="170.1" width="10" height="3" transform="rotate(-22 232.7 170.1)"/><rect x="239.2" y="168.1" width="6" height="6" transform="rotate(-22 239.2 168.1)"/><rect x="245.4" y="170.3" width="8" height="3" transform="rotate(-22 245.4 170.3)"/><rect x="251.5" y="168.4" width="4" height="4" transform="rotate(-22 251.5 168.4)"/><rect x="266.7" y="170.0" width="10" height="3" transform="rotate(-22 266.7 170.0)"/><rect x="275.2" y="170.2" width="5" height="3" transform="rotate(-22 275.2 170.2)"/><rect x="287.1" y="169.7" width="10" height="4" transform="rotate(-22 287.1 169.7)"/><rect x="296.4" y="170.1" width="4" height="3" transform="rotate(-22 296.4 170.1)"/><rect x="309.2" y="169.8" width="10" height="5" transform="rotate(-22 309.2 169.8)"/><rect x="317.1" y="168.5" width="10" height="6" transform="rotate(-22 317.1 168.5)"/><rect x="352.0" y="167.8" width="5" height="8" transform="rotate(8 352.0 167.8)"/><rect x="401.0" y="170.3" width="10" height="4" transform="rotate(8 401.0 170.3)"/><rect x="420.1" y="168.5" width="5" height="4" transform="rotate(8 420.1 168.5)"/><rect x="429.1" y="170.4" width="3" height="8" transform="rotate(8 429.1 170.4)"/><rect x="435.1" y="170.3" width="10" height="3" transform="rotate(8 435.1 170.3)"/><rect x="448.0" y="168.5" width="4" height="3" transform="rotate(8 448.0 168.5)"/><rect x="462.6" y="170.2" width="6" height="4" transform="rotate(8 462.6 170.2)"/><rect x="471.5" y="168.9" width="3" height="5" transform="rotate(8 471.5 168.9)"/><rect x="478.5" y="169.7" width="5" height="5" transform="rotate(8 478.5 169.7)"/><rect x="21.7" y="176.8" width="4" height="12" transform="rotate(40 21.7 176.8)"/><rect x="29.4" y="174.9" width="5" height="5" transform="rotate(40 29.4 174.9)"/><rect x="36.3" y="175.5" width="6" height="6" transform="rotate(40 36.3 175.5)"/><rect x="44.3" y="175.7" width="4" height="8" transform="rotate(40 44.3 175.7)"/><rect x="49.5" y="176.9" width="3" height="6" transform="rotate(40 49.5 176.9)"/><rect x="64.8" y="176.2" width="8" height="4" transform="rotate(40 64.8 176.2)"/><rect x="77.0" y="176.0" width="8" height="5" transform="rotate(40 77.0 176.0)"/><rect x="98.6" y="175.4" width="6" height="6" transform="rotate(-20 98.6 175.4)"/><rect x="142.4" y="175.6" width="8" height="3" transform="rotate(-20 142.4 175.6)"/><rect x="148.4" y="176.8" width="6" height="4" transform="rotate(-20 148.4 176.8)"/><rect x="163.3" y="176.9" width="3" height="7" transform="rotate(-22 163.3 176.9)"/><rect x="168.8" y="175.3" width="10" height="5" transform="rotate(-22 168.8 175.3)"/><rect x="174.7" y="176.0" width="10" height="5" transform="rotate(-22 174.7 176.0)"/><rect x="181.5" y="177.1" width="4" height="3" transform="rotate(-22 181.5 177.1)"/><rect x="204.0" y="175.5" width="10" height="3" transform="rotate(-22 204.0 175.5)"/><rect x="210.0" y="176.7" width="10" height="5" transform="rotate(-22 210.0 176.7)"/><rect x="216.6" y="175.3" width="4" height="5" transform="rotate(-22 216.6 175.3)"/><rect x="224.7" y="174.9" width="7" height="4" transform="rotate(-22 224.7 174.9)"/><rect x="232.7" y="174.8" width="4" height="3" transform="rotate(-22 232.7 174.8)"/><rect x="239.7" y="175.3" width="5" height="6" transform="rotate(-22 239.7 175.3)"/><rect x="246.5" y="174.7" width="10" height="3" transform="rotate(-22 246.5 174.7)"/><rect x="275.5" y="175.8" width="6" height="3" transform="rotate(-22 275.5 175.8)"/><rect x="288.1" y="174.7" width="6" height="4" transform="rotate(-22 288.1 174.7)"/><rect x="301.9" y="175.7" width="4" height="7" transform="rotate(-22 301.9 175.7)"/><rect x="315.2" y="175.1" width="10" height="5" transform="rotate(-22 315.2 175.1)"/><rect x="329.6" y="176.1" width="4" height="5" transform="rotate(8 329.6 176.1)"/><rect x="337.3" y="175.3" width="4" height="4" transform="rotate(8 337.3 175.3)"/><rect x="372.2" y="175.9" width="4" height="6" transform="rotate(8 372.2 175.9)"/><rect x="392.2" y="175.2" width="6" height="6" transform="rotate(8 392.2 175.2)"/><rect x="399.7" y="175.1" width="7" height="3" transform="rotate(8 399.7 175.1)"/><rect x="407.2" y="177.1" width="8" height="3" transform="rotate(8 407.2 177.1)"/><rect x="420.4" y="175.5" width="7" height="6" transform="rotate(8 420.4 175.5)"/><rect x="429.1" y="174.7" width="7" height="5" transform="rotate(8 429.1 174.7)"/><rect x="435.9" y="174.9" width="3" height="4" transform="rotate(8 435.9 174.9)"/><rect x="442.1" y="174.9" width="3" height="10" transform="rotate(8 442.1 174.9)"/><rect x="470.7" y="176.3" width="7" height="4" transform="rotate(8 470.7 176.3)"/><rect x="477.3" y="175.4" width="10" height="4" transform="rotate(8 477.3 175.4)"/><rect x="0.6" y="182.1" width="5" height="6" transform="rotate(40 0.6 182.1)"/><rect x="8.4" y="184.0" width="8" height="4" transform="rotate(40 8.4 184.0)"/><rect x="13.8" y="182.9" width="4" height="10" transform="rotate(40 13.8 182.9)"/><rect x="21.4" y="181.9" width="10" height="6" transform="rotate(40 21.4 181.9)"/><rect x="36.4" y="184.3" width="6" height="12" transform="rotate(40 36.4 184.3)"/><rect x="50.4" y="184.5" width="6" height="8" transform="rotate(40 50.4 184.5)"/><rect x="58.1" y="183.5" width="5" height="12" transform="rotate(40 58.1 183.5)"/><rect x="62.9" y="183.6" width="6" height="5" transform="rotate(40 62.9 183.6)"/><rect x="70.9" y="183.7" width="12" height="3" transform="rotate(40 70.9 183.7)"/><rect x="77.8" y="181.6" width="5" height="10" transform="rotate(40 77.8 181.6)"/><rect x="90.7" y="183.5" width="8" height="6" transform="rotate(-20 90.7 183.5)"/><rect x="127.1" y="184.2" width="7" height="3" transform="rotate(-20 127.1 184.2)"/><rect x="140.2" y="181.8" width="8" height="4" transform="rotate(-20 140.2 181.8)"/><rect x="169.1" y="184.3" width="4" height="6" transform="rotate(-22 169.1 184.3)"/><rect x="176.6" y="182.2" width="5" height="5" transform="rotate(-22 176.6 182.2)"/><rect x="181.5" y="183.6" width="7" height="4" transform="rotate(-22 181.5 183.6)"/><rect x="197.9" y="183.2" width="7" height="6" transform="rotate(-22 197.9 183.2)"/><rect x="205.0" y="181.9" width="5" height="8" transform="rotate(-22 205.0 181.9)"/><rect x="218.9" y="182.5" width="10" height="3" transform="rotate(-22 218.9 182.5)"/><rect x="231.6" y="183.5" width="10" height="3" transform="rotate(-22 231.6 183.5)"/><rect x="237.8" y="181.9" width="7" height="5" transform="rotate(-22 237.8 181.9)"/><rect x="247.3" y="182.1" width="6" height="8" transform="rotate(-22 247.3 182.1)"/><rect x="251.5" y="183.0" width="10" height="6" transform="rotate(-22 251.5 183.0)"/><rect x="265.8" y="183.1" width="4" height="6" transform="rotate(-22 265.8 183.1)"/><rect x="288.1" y="183.0" width="3" height="7" transform="rotate(-22 288.1 183.0)"/><rect x="296.4" y="182.2" width="5" height="8" transform="rotate(-22 296.4 182.2)"/><rect x="328.8" y="182.5" width="4" height="3" transform="rotate(8 328.8 182.5)"/><rect x="337.1" y="183.2" width="4" height="3" transform="rotate(8 337.1 183.2)"/><rect x="364.8" y="182.9" width="6" height="10" transform="rotate(8 364.8 182.9)"/><rect x="371.4" y="182.8" width="3" height="8" transform="rotate(8 371.4 182.8)"/><rect x="393.3" y="183.8" width="3" height="6" transform="rotate(8 393.3 183.8)"/><rect x="399.6" y="181.5" width="4" height="3" transform="rotate(8 399.6 181.5)"/><rect x="414.3" y="183.4" width="4" height="6" transform="rotate(8 414.3 183.4)"/><rect x="419.7" y="181.7" width="3" height="4" transform="rotate(8 419.7 181.7)"/><rect x="429.0" y="182.8" width="3" height="5" transform="rotate(8 429.0 182.8)"/><rect x="435.0" y="181.9" width="7" height="6" transform="rotate(8 435.0 181.9)"/><rect x="442.9" y="181.6" width="8" height="3" transform="rotate(8 442.9 181.6)"/><rect x="448.2" y="184.1" width="3" height="4" transform="rotate(8 448.2 184.1)"/><rect x="457.3" y="182.4" width="7" height="3" transform="rotate(8 457.3 182.4)"/><rect x="462.6" y="182.3" width="7" height="6" transform="rotate(8 462.6 182.3)"/><rect x="478.3" y="181.9" width="3" height="10" transform="rotate(8 478.3 181.9)"/><rect x="0.9" y="189.0" width="6" height="4" transform="rotate(40 0.9 189.0)"/><rect x="13.6" y="189.1" width="3" height="5" transform="rotate(40 13.6 189.1)"/><rect x="29.0" y="189.0" width="6" height="4" transform="rotate(40 29.0 189.0)"/><rect x="35.2" y="191.0" width="6" height="10" transform="rotate(40 35.2 191.0)"/><rect x="42.0" y="189.2" width="8" height="3" transform="rotate(40 42.0 189.2)"/><rect x="50.1" y="190.4" width="5" height="10" transform="rotate(40 50.1 190.4)"/><rect x="56.4" y="189.6" width="12" height="3" transform="rotate(40 56.4 189.6)"/><rect x="71.4" y="190.0" width="5" height="8" transform="rotate(40 71.4 190.0)"/><rect x="85.3" y="188.8" width="4" height="6" transform="rotate(-20 85.3 188.8)"/><rect x="100.1" y="190.6" width="3" height="6" transform="rotate(-20 100.1 190.6)"/><rect x="128.2" y="190.5" width="5" height="8" transform="rotate(-20 128.2 190.5)"/><rect x="132.9" y="188.6" width="10" height="6" transform="rotate(-20 132.9 188.6)"/><rect x="140.5" y="190.0" width="6" height="5" transform="rotate(-20 140.5 190.0)"/><rect x="161.2" y="191.2" width="3" height="6" transform="rotate(-22 161.2 191.2)"/><rect x="168.1" y="188.6" width="4" height="5" transform="rotate(-22 168.1 188.6)"/><rect x="174.7" y="188.8" width="5" height="4" transform="rotate(-22 174.7 188.8)"/><rect x="181.8" y="189.0" width="3" height="7" transform="rotate(-22 181.8 189.0)"/><rect x="190.5" y="189.3" width="3" height="6" transform="rotate(-22 190.5 189.3)"/><rect x="198.0" y="189.7" width="5" height="3" transform="rotate(-22 198.0 189.7)"/><rect x="205.3" y="189.6" width="3" height="6" transform="rotate(-22 205.3 189.6)"/><rect x="218.6" y="191.2" width="6" height="5" transform="rotate(-22 218.6 191.2)"/><rect x="226.5" y="188.7" width="4" height="6" transform="rotate(-22 226.5 188.7)"/><rect x="231.0" y="188.6" width="5" height="4" transform="rotate(-22 231.0 188.6)"/><rect x="239.0" y="190.0" width="6" height="6" transform="rotate(-22 239.0 190.0)"/><rect x="245.6" y="191.2" width="8" height="3" transform="rotate(-22 245.6 191.2)"/><rect x="259.0" y="189.4" width="6" height="7" transform="rotate(-22 259.0 189.4)"/><rect x="275.0" y="189.5" width="5" height="3" transform="rotate(-22 275.0 189.5)"/><rect x="279.9" y="189.2" width="10" height="3" transform="rotate(-22 279.9 189.2)"/><rect x="287.2" y="190.8" width="6" height="5" transform="rotate(-22 287.2 190.8)"/><rect x="303.4" y="191.4" width="5" height="4" transform="rotate(-22 303.4 191.4)"/><rect x="309.0" y="189.6" width="6" height="4" transform="rotate(-22 309.0 189.6)"/><rect x="329.4" y="189.2" width="6" height="10" transform="rotate(8 329.4 189.2)"/><rect x="338.2" y="188.9" width="3" height="7" transform="rotate(8 338.2 188.9)"/><rect x="343.5" y="190.0" width="6" height="7" transform="rotate(8 343.5 190.0)"/><rect x="351.3" y="190.0" width="5" height="6" transform="rotate(8 351.3 190.0)"/><rect x="359.2" y="189.2" width="3" height="10" transform="rotate(8 359.2 189.2)"/><rect x="365.1" y="188.6" width="6" height="4" transform="rotate(8 365.1 188.6)"/><rect x="371.4" y="188.8" width="6" height="6" transform="rotate(8 371.4 188.8)"/><rect x="387.1" y="190.5" width="10" height="4" transform="rotate(8 387.1 190.5)"/><rect x="394.2" y="191.3" width="5" height="6" transform="rotate(8 394.2 191.3)"/><rect x="399.9" y="190.5" width="5" height="4" transform="rotate(8 399.9 190.5)"/><rect x="443.3" y="190.8" width="5" height="10" transform="rotate(8 443.3 190.8)"/><rect x="461.9" y="190.6" width="5" height="5" transform="rotate(8 461.9 190.6)"/><rect x="469.8" y="191.0" width="7" height="5" transform="rotate(8 469.8 191.0)"/><rect x="477.3" y="191.5" width="6" height="3" transform="rotate(8 477.3 191.5)"/><rect x="0.8" y="195.7" width="5" height="6" transform="rotate(40 0.8 195.7)"/><rect x="6.5" y="198.1" width="5" height="4" transform="rotate(40 6.5 198.1)"/><rect x="21.8" y="196.5" width="5" height="4" transform="rotate(40 21.8 196.5)"/><rect x="36.2" y="197.7" width="5" height="6" transform="rotate(40 36.2 197.7)"/><rect x="42.1" y="197.4" width="6" height="6" transform="rotate(40 42.1 197.4)"/><rect x="48.9" y="198.4" width="3" height="12" transform="rotate(40 48.9 198.4)"/><rect x="58.1" y="196.5" width="10" height="3" transform="rotate(40 58.1 196.5)"/><rect x="64.6" y="197.8" width="12" height="6" transform="rotate(40 64.6 197.8)"/><rect x="70.9" y="195.9" width="8" height="5" transform="rotate(40 70.9 195.9)"/><rect x="86.0" y="197.9" width="4" height="8" transform="rotate(-20 86.0 197.9)"/><rect x="91.4" y="196.9" width="8" height="3" transform="rotate(-20 91.4 196.9)"/><rect x="120.4" y="196.1" width="8" height="5" transform="rotate(-20 120.4 196.1)"/><rect x="134.8" y="196.1" width="6" height="3" transform="rotate(-20 134.8 196.1)"/><rect x="142.0" y="196.9" width="4" height="5" transform="rotate(-20 142.0 196.9)"/><rect x="168.8" y="197.2" width="8" height="3" transform="rotate(-22 168.8 197.2)"/><rect x="175.2" y="197.3" width="4" height="3" transform="rotate(-22 175.2 197.3)"/><rect x="183.2" y="196.3" width="5" height="6" transform="rotate(-22 183.2 196.3)"/><rect x="195.6" y="196.7" width="3" height="10" transform="rotate(-22 195.6 196.7)"/><rect x="204.7" y="195.6" width="10" height="3" transform="rotate(-22 204.7 195.6)"/><rect x="210.8" y="198.1" width="10" height="3" transform="rotate(-22 210.8 198.1)"/><rect x="219.5" y="197.0" width="6" height="5" transform="rotate(-22 219.5 197.0)"/><rect x="238.0" y="195.6" width="6" height="4" transform="rotate(-22 238.0 195.6)"/><rect x="247.1" y="195.7" width="8" height="5" transform="rotate(-22 247.1 195.7)"/><rect x="254.0" y="197.4" width="3" height="8" transform="rotate(-22 254.0 197.4)"/><rect x="259.8" y="198.0" width="6" height="3" transform="rotate(-22 259.8 198.0)"/><rect x="274.6" y="197.3" width="4" height="3" transform="rotate(-22 274.6 197.3)"/><rect x="301.9" y="198.0" width="8" height="5" transform="rotate(-22 301.9 198.0)"/><rect x="307.6" y="196.4" width="8" height="4" transform="rotate(-22 307.6 196.4)"/><rect x="322.1" y="197.9" width="4" height="3" transform="rotate(8 322.1 197.9)"/><rect x="329.7" y="198.0" width="3" height="4" transform="rotate(8 329.7 198.0)"/><rect x="336.8" y="196.0" width="7" height="4" transform="rotate(8 336.8 196.0)"/><rect x="344.9" y="196.7" width="6" height="3" transform="rotate(8 344.9 196.7)"/><rect x="350.6" y="197.6" width="5" height="3" transform="rotate(8 350.6 197.6)"/><rect x="364.8" y="195.8" width="6" height="4" transform="rotate(8 364.8 195.8)"/><rect x="379.0" y="197.7" width="10" height="3" transform="rotate(8 379.0 197.7)"/><rect x="405.6" y="198.5" width="5" height="4" transform="rotate(8 405.6 198.5)"/><rect x="414.0" y="195.6" width="5" height="4" transform="rotate(8 414.0 195.6)"/><rect x="427.4" y="196.8" width="3" height="10" transform="rotate(8 427.4 196.8)"/><rect x="449.5" y="197.8" width="10" height="4" transform="rotate(8 449.5 197.8)"/><rect x="464.5" y="196.5" width="5" height="3" transform="rotate(8 464.5 196.5)"/><rect x="469.6" y="196.0" width="5" height="4" transform="rotate(8 469.6 196.0)"/><rect x="477.9" y="196.1" width="10" height="4" transform="rotate(8 477.9 196.1)"/><rect x="-5.6" y="202.5" width="12" height="3" transform="rotate(40 -5.6 202.5)"/><rect x="0.2" y="203.7" width="5" height="5" transform="rotate(40 0.2 203.7)"/><rect x="7.9" y="204.8" width="10" height="6" transform="rotate(40 7.9 204.8)"/><rect x="15.8" y="202.6" width="5" height="3" transform="rotate(40 15.8 202.6)"/><rect x="23.2" y="204.3" width="5" height="5" transform="rotate(40 23.2 204.3)"/><rect x="28.2" y="204.9" width="5" height="5" transform="rotate(40 28.2 204.9)"/><rect x="36.9" y="204.2" width="8" height="6" transform="rotate(40 36.9 204.2)"/><rect x="42.2" y="204.9" width="5" height="12" transform="rotate(40 42.2 204.9)"/><rect x="51.0" y="205.4" width="5" height="6" transform="rotate(40 51.0 205.4)"/><rect x="70.6" y="203.6" width="10" height="5" transform="rotate(40 70.6 203.6)"/><rect x="76.8" y="205.0" width="10" height="4" transform="rotate(40 76.8 205.0)"/><rect x="83.8" y="202.9" width="6" height="5" transform="rotate(-20 83.8 202.9)"/><rect x="105.7" y="205.0" width="3" height="7" transform="rotate(-20 105.7 205.0)"/><rect x="120.8" y="203.7" width="10" height="3" transform="rotate(-20 120.8 203.7)"/><rect x="132.8" y="203.5" width="5" height="4" transform="rotate(-20 132.8 203.5)"/><rect x="140.1" y="203.9" width="8" height="3" transform="rotate(-20 140.1 203.9)"/><rect x="146.7" y="202.8" width="5" height="6" transform="rotate(-20 146.7 202.8)"/><rect x="160.6" y="202.6" width="3" height="6" transform="rotate(-22 160.6 202.6)"/><rect x="170.2" y="203.7" width="8" height="4" transform="rotate(-22 170.2 203.7)"/><rect x="175.5" y="203.0" width="4" height="6" transform="rotate(-22 175.5 203.0)"/><rect x="190.0" y="204.4" width="8" height="3" transform="rotate(-22 190.0 204.4)"/><rect x="196.8" y="205.4" width="8" height="5" transform="rotate(-22 196.8 205.4)"/><rect x="203.4" y="202.9" width="6" height="4" transform="rotate(-22 203.4 202.9)"/><rect x="233.2" y="204.9" width="3" height="4" transform="rotate(-22 233.2 204.9)"/><rect x="239.9" y="204.3" width="4" height="8" transform="rotate(-22 239.9 204.3)"/><rect x="246.5" y="205.5" width="5" height="6" transform="rotate(-22 246.5 205.5)"/><rect x="253.7" y="203.9" width="3" height="10" transform="rotate(-22 253.7 203.9)"/><rect x="261.5" y="203.2" width="8" height="3" transform="rotate(-22 261.5 203.2)"/><rect x="268.3" y="204.0" width="4" height="3" transform="rotate(-22 268.3 204.0)"/><rect x="296.5" y="202.6" width="3" height="4" transform="rotate(-22 296.5 202.6)"/><rect x="301.1" y="204.8" width="10" height="6" transform="rotate(-22 301.1 204.8)"/><rect x="307.9" y="205.1" width="4" height="8" transform="rotate(-22 307.9 205.1)"/><rect x="314.9" y="203.0" width="7" height="3" transform="rotate(-22 314.9 203.0)"/><rect x="330.3" y="202.6" width="6" height="5" transform="rotate(8 330.3 202.6)"/><rect x="335.6" y="205.0" width="4" height="4" transform="rotate(8 335.6 205.0)"/><rect x="344.8" y="204.8" width="10" height="5" transform="rotate(8 344.8 204.8)"/><rect x="352.4" y="202.9" width="3" height="5" transform="rotate(8 352.4 202.9)"/><rect x="364.9" y="202.7" width="4" height="3" transform="rotate(8 364.9 202.7)"/><rect x="371.4" y="204.1" width="5" height="8" transform="rotate(8 371.4 204.1)"/><rect x="379.4" y="203.7" width="3" height="5" transform="rotate(8 379.4 203.7)"/><rect x="385.5" y="203.5" width="4" height="4" transform="rotate(8 385.5 203.5)"/><rect x="401.1" y="203.1" width="8" height="6" transform="rotate(8 401.1 203.1)"/><rect x="405.6" y="203.9" width="7" height="4" transform="rotate(8 405.6 203.9)"/><rect x="434.4" y="204.6" width="3" height="10" transform="rotate(8 434.4 204.6)"/><rect x="448.9" y="205.2" width="10" height="5" transform="rotate(8 448.9 205.2)"/><rect x="461.7" y="202.7" width="4" height="4" transform="rotate(8 461.7 202.7)"/></g><path d="M0,0 L53,0 L53,15 L0,4 Z" fill="#d9edba"/><path d="M56,0 L92,0 L90,40 L70,36 L58,22 Z" fill="#d9edba"/><path d="M181,23 L210,23 L210,58 L183,58 Z" fill="#d9edba"/><path d="M121,78 L140,73 L164,80 L164,100 L121,100 Z" fill="#d9edba"/><path d="M121,100 L164,100 L160,115 L125,115 Z" fill="#d9edba"/><path d="M291,6 L308,8 L300,29 L291,28 Z" fill="#dff0c4"/><path d="M308,29 L324,30 L324,68 L310,68 Z" fill="#c5dcac"/><path d="M326,33 L346,34 L346,52 L326,52 Z" fill="#c5dcac"/><path d="M390,77 L410,77 L410,100 L390,100 Z" fill="#c5dcac"/><path d="M358,32 L374,34 L372,89 L357,89 Z" fill="#dff0c4"/><path d="M366,1 L395,2 L403,20 L400,32 L378,28 L366,16 Z" fill="#dcd8d7"/><path d="M448,0 L476,0 L476,42 L452,42 Z" fill="#c8dab8"/><path d="M432,36 L448,18 L453,42 L430,44 Z" fill="#dff0c4"/><path d="M256,64 L270,64 L270,75 L256,75 Z" fill="#c5dcac"/><path d="M273,53 L283,53 L283,63 L273,63 Z" fill="#c5dcac"/><path d="M294,75 L313,78 L313,100 L294,100 Z" fill="#c5dcac"/><path d="M70,159 L81,156 L120,200 L100,200 Z" fill="#dad7d6"/><path d="M92,139 L117,141 L117,156 L95,156 Z" fill="#dff0c4"/><path d="M130,160 L134,160 L134,168 L130,168 Z" fill="#b9dfb3"/><path d="M33,186 L50,186 L50,200 L33,200 Z" fill="#d9edba"/><path d="M232,113 L244,113 L244,119 L232,119 Z" fill="#b9dfb3"/><path d="M349,133 L358,133 L358,161 L349,161 Z" fill="#d9edba"/><path d="M377,124 L380,124 L380,131 L377,131 Z" fill="#b9dfb3"/><path d="M402,176 L413,176 L413,184 L402,184 Z" fill="#d9edba"/><path d="M436,182 L443,182 L443,185 L436,185 Z" fill="#b9dfb3"/><path d="M465,156 L471,156 L471,167 L465,167 Z" fill="#c5dcac"/><path d="M380,1 L390,2 L389,7 L380,6 Z" fill="#b9dfb3"/><path d="M425,3 L434,3 L434,18 L425,18 Z" fill="#b9dfb3"/><ellipse cx="151" cy="41" rx="13" ry="9" transform="rotate(-20 151 41)" fill="#b9dfb3"/><g fill="none" stroke="#ffffff" stroke-width="1.8" stroke-linecap="round" stroke-linejoin="round"><path d="M0,4 L53,21"/><path d="M55,0 L53,21 L46,36 L33,57 L10,89 L3,100"/><path d="M0,33 L72,84 L73,100"/><path d="M0,46 L22,12"/><path d="M0,80 L28,100"/><path d="M72,84 L79,63 L91,45"/><path d="M91,45 L147,17"/><path d="M121,100 L138,70 L160,61"/><path d="M184,0 L173,59 L191,100"/><path d="M215,0 L207,60 L223,100"/><path d="M254,0 L245,66 L241,100"/><path d="M301,28 L287,84"/><path d="M160,60 L207,60.7 L245,65.5 L294,46"/><path d="M363,32 L355,100"/><path d="M376,39 L367,100"/><path d="M418,77 L455,82"/><path d="M459,53 L454,100"/><path d="M28,100 L75,143"/><path d="M73,100 L70,107 L25,166 L0,195"/><path d="M0,143 L61,200"/><path d="M84,139 L110,135 L160,121"/><path d="M120,100 L114,129 L110,135"/><path d="M89,108 L106,100"/><path d="M107,100 L107,111"/><path d="M189,100 L220,170 L202,200"/><path d="M223,100 L246,154"/><path d="M241,100 L260,143 L294,189"/><path d="M160,120 L189,106"/><path d="M177,170 L260,146"/><path d="M174,200 L177,170"/><path d="M287,120 L269,142 L258,177 L238,200"/><path d="M274,150 L288,132 L312,125"/><path d="M276,161 L320,163"/><path d="M367,100 L408,106 L476,117"/><path d="M320,110 L352,114"/><path d="M320,126 L404,139"/><path d="M320,163 L358,161 L397,167"/><path d="M353,100 L345,170 L320,200"/><path d="M366,100 L356,161 L370,200"/><path d="M452,100 L441,173"/><path d="M472,100 L459,200"/></g><g fill="none" stroke-linecap="round" stroke-linejoin="round"><path d="M60,0 L96,5.6 L160,16.7 L209,21.6 L251,27 L292,33 L313,12.6 L320,9.8" stroke="#edcf78" stroke-width="4.6"/><path d="M263,0 L299,4 L320,11 L362,28 L383,35 L418,40 L476,49" stroke="#edcf78" stroke-width="4.6"/><path d="M96,0 L89,100 L85,121 L80,135 L74,143 L46,178 L28,200" stroke="#edcf78" stroke-width="4.6"/><path d="M81,135 L85,145 L91,156" stroke="#edcf78" stroke-width="4.6"/><path d="M74,143 L86,153 L93,164 L131,200" stroke="#edcf78" stroke-width="4.6"/><path d="M91,156 L98,160 L139,152 L160,142 L202,124 L256,100 L284,85 Q296,86 303,92 Q312,100 313,111 L314,173 L292,189 L299,200" stroke="#edcf78" stroke-width="4.6"/><path d="M408,140 L476,152" stroke="#edcf78" stroke-width="4.6"/><path d="M60,0 L96,5.6 L160,16.7 L209,21.6 L251,27 L292,33 L313,12.6 L320,9.8" stroke="#fae292" stroke-width="3.2"/><path d="M263,0 L299,4 L320,11 L362,28 L383,35 L418,40 L476,49" stroke="#fae292" stroke-width="3.2"/><path d="M96,0 L89,100 L85,121 L80,135 L74,143 L46,178 L28,200" stroke="#fae292" stroke-width="3.2"/><path d="M81,135 L85,145 L91,156" stroke="#fae292" stroke-width="3.2"/><path d="M74,143 L86,153 L93,164 L131,200" stroke="#fae292" stroke-width="3.2"/><path d="M91,156 L98,160 L139,152 L160,142 L202,124 L256,100 L284,85 Q296,86 303,92 Q312,100 313,111 L314,173 L292,189 L299,200" stroke="#fae292" stroke-width="3.2"/><path d="M408,140 L476,152" stroke="#fae292" stroke-width="3.2"/></g><g fill="none" stroke-linecap="round" stroke-linejoin="round"><path d="M441,0 L430,14 L423,36 L415,50 L409,100 L404,140 L388,200" stroke="#e9b85e" stroke-width="7.5"/><path d="M445,0 L450,18 L454,42 L458,48" stroke="#e9b85e" stroke-width="4"/><path d="M436,6 L428,28 L433,36" stroke="#e9b85e" stroke-width="4"/><path d="M441,0 L430,14 L423,36 L415,50 L409,100 L404,140 L388,200" stroke="#f8cf7e" stroke-width="6"/><path d="M445,0 L450,18 L454,42 L458,48" stroke="#f8cf7e" stroke-width="2.6"/><path d="M436,6 L428,28 L433,36" stroke="#f8cf7e" stroke-width="2.6"/></g><path d="M0,182 L17,200" stroke="#f2b86a" stroke-width="3.5" fill="none"/><path d="M0,189 L6,196 L4,200 L0,200 Z" fill="#a9cce8"/></svg>
</div>

<!-- tabs -->
<div class="a" style="left:855px;top:355px;width:77px;height:42px;border:1px solid #ddd;border-bottom:0;border-radius:4px 4px 0 0;background:#fff"></div>
<div class="a" style="left:931px;top:396px;width:400px;height:1px;background:#ddd"></div>
<div class="a" style="left:871px;top:366px;color:#555">Файлы</div>
<div class="a" style="left:855px;top:417px;color:#337ab7;letter-spacing:0.13px">Прикрепить файл</div>
<svg class="a" style="left:970px;top:414px" width="26" height="22" viewBox="0 0 26 22"><path d="M12.5,17.6 L19.8,10.2 A2.9,2.9 0 0 0 15.0,6.5 L5.7,14.6 A2.3,2.3 0 0 0 9.3,17.3 L17.4,9.9 A1.1,1.1 0 0 0 15.9,8.5 L10.3,12.6" fill="none" stroke="#337ab7" stroke-width="1.3" stroke-linecap="round" stroke-linejoin="round"/></svg>
</body></html>
